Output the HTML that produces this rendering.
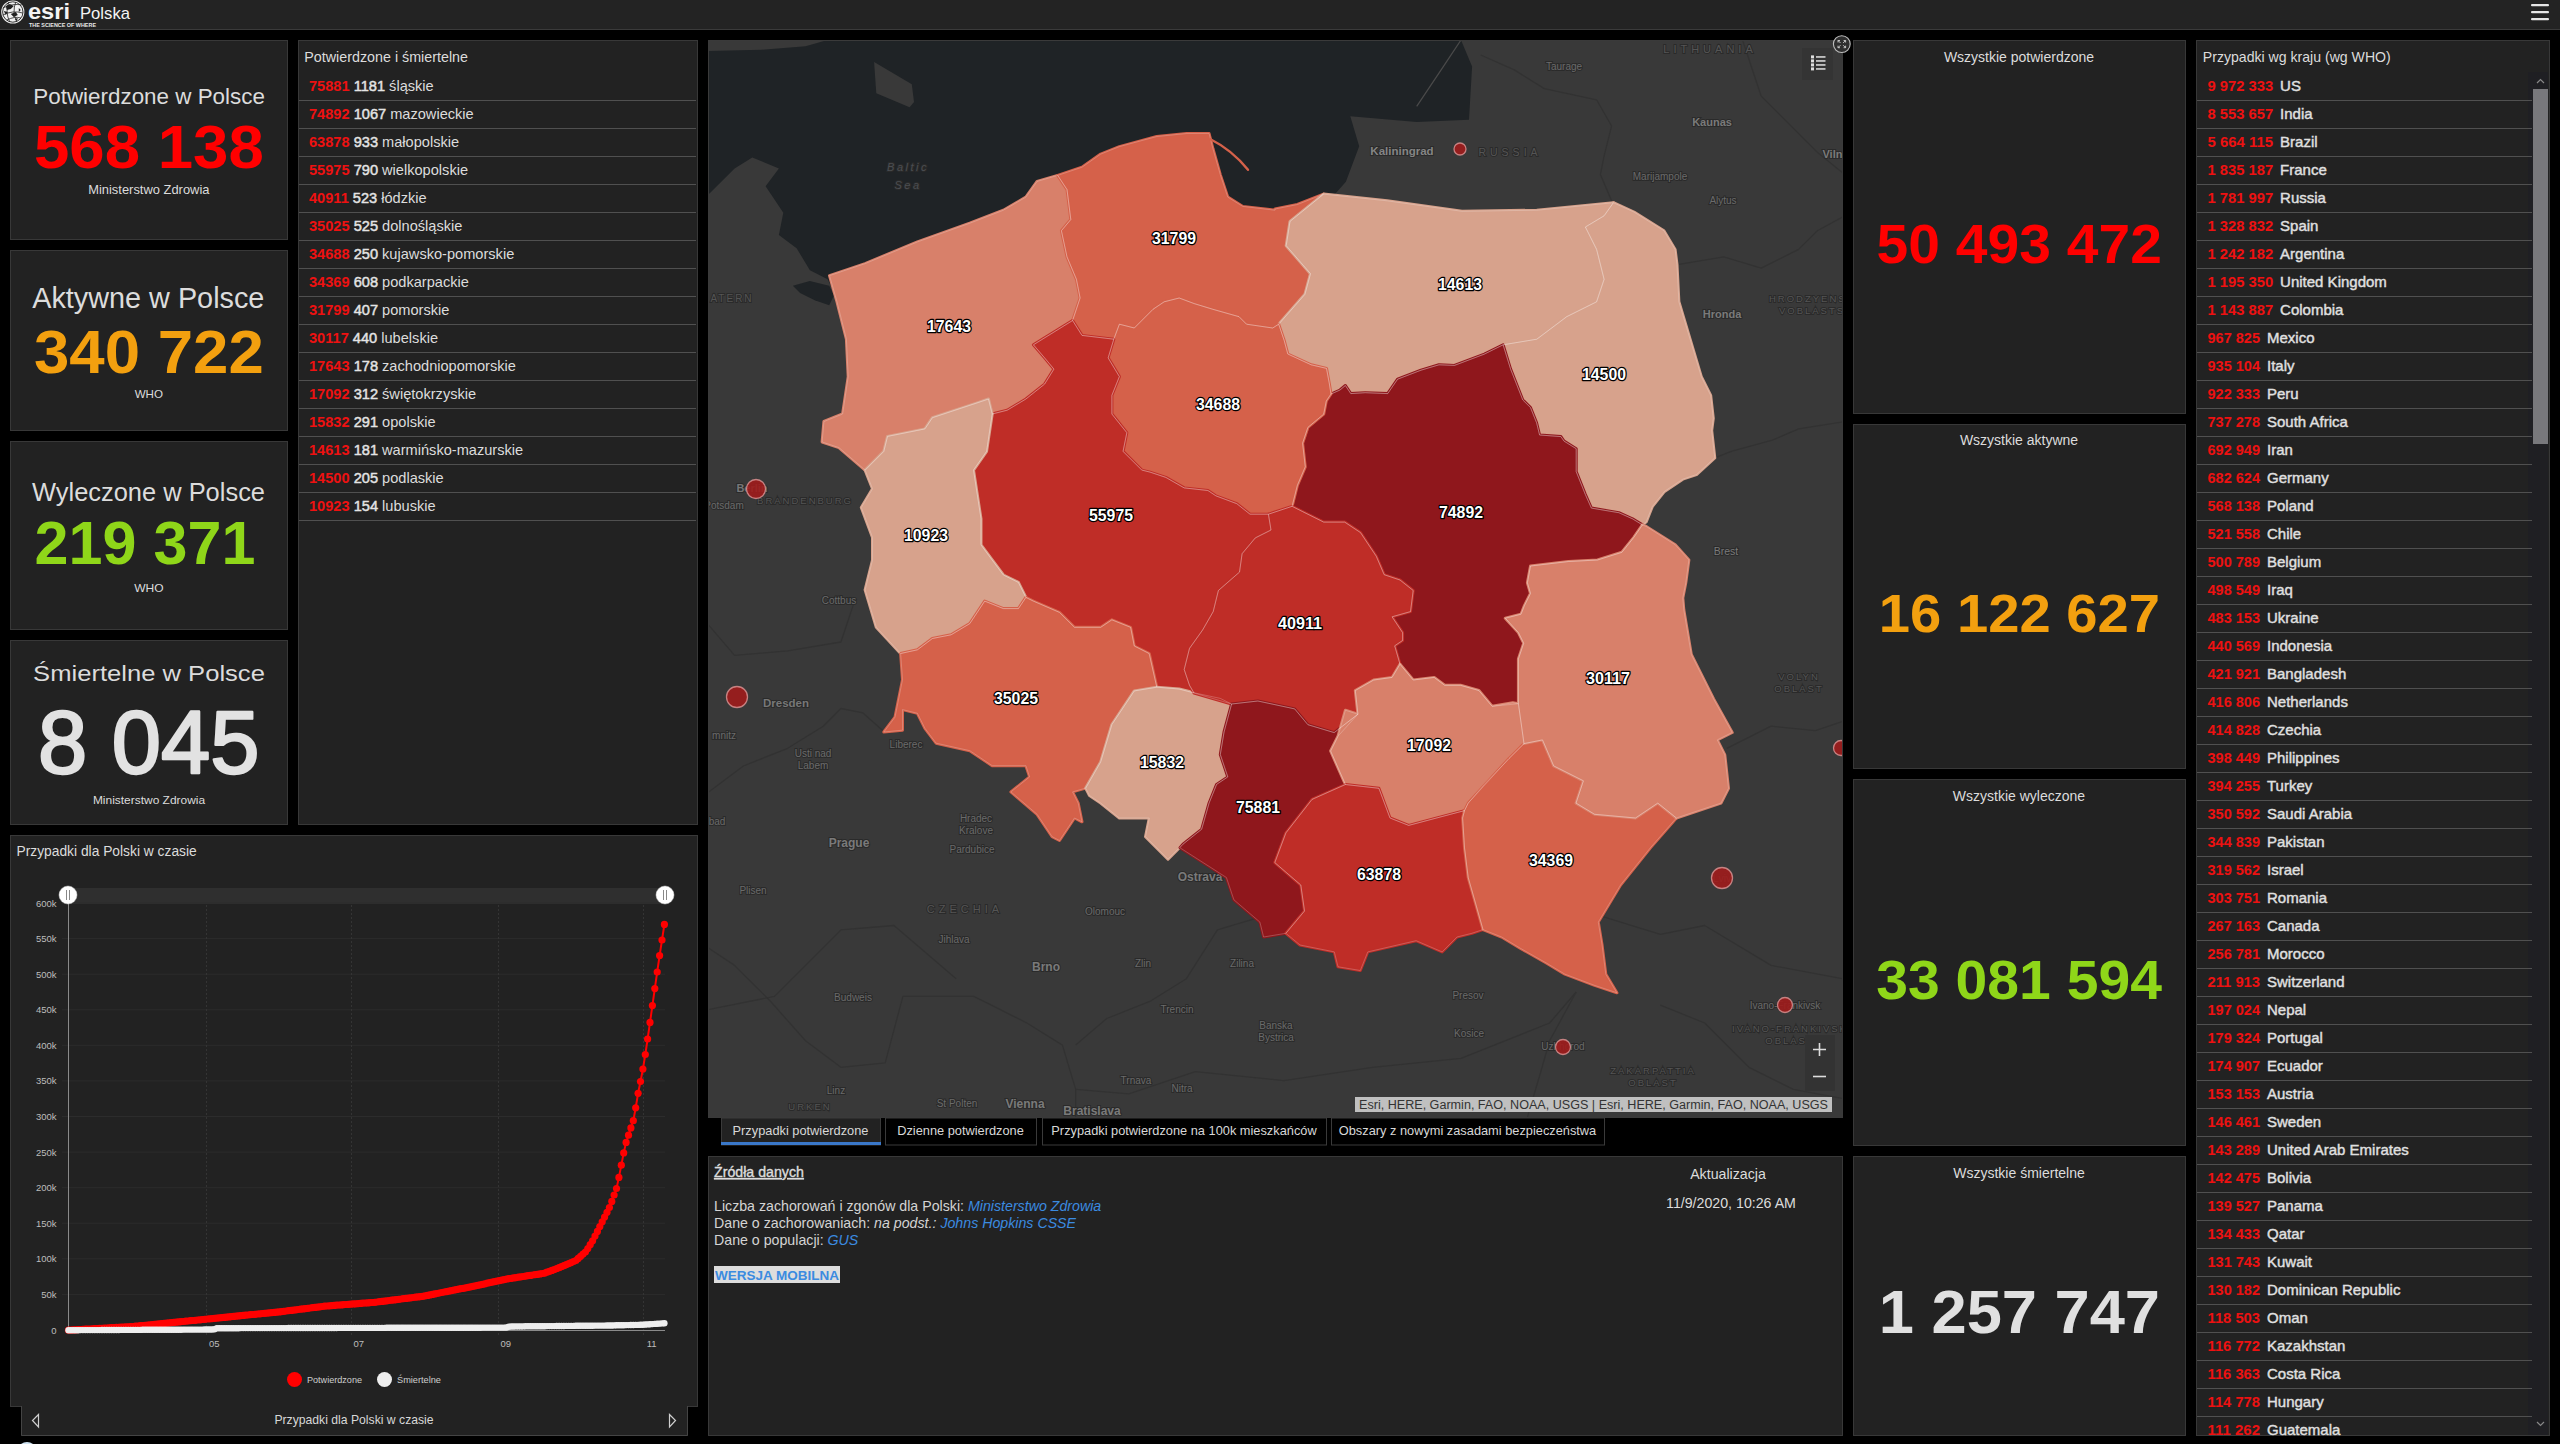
<!DOCTYPE html><html><head><meta charset="utf-8"><title>COVID-19 Polska</title>
<style>html,body{margin:0;padding:0;background:#000;overflow:hidden;}svg{display:block;}text{font-family:"Liberation Sans",sans-serif;}</style></head><body>
<svg width="2560" height="1444" viewBox="0 0 2560 1444">
<rect x="0" y="0" width="2560" height="1444" fill="#000000"/>
<rect x="0" y="0" width="2560" height="29" fill="#232323"/>
<rect x="0" y="29" width="2560" height="1" fill="#3a3a3a"/>
<g transform="translate(12.8,12)">
<circle r="11.6" fill="#f0f0f0"/>
<circle r="10.2" fill="none" stroke="#232323" stroke-width="0.9"/>
<path d="M-7,-6 L-3,-8 L1,-6 L-2,-3 L-6,-2 Z M-9,-1 L-5,0 L-7,3 Z M-2,2 L3,0 L5,3 L1,5 Z M2,7 L5,6 L4,9 Z M6,-4 L8,-2 L6,0 Z" fill="#1e1e1e"/>
<path d="M-10,-4 Q0,-9 9,-7 M-10,3 Q0,-2 10,1 M-6,8 Q2,4 8,6 M-4,-10 Q-8,0 -3,10 M3,-10 Q-1,0 4,10" fill="none" stroke="#262626" stroke-width="0.8"/>
</g>
<text x="28.0" y="19.0" font-size="22.00" fill="#f4f4f4" text-anchor="start" font-weight="bold" textLength="42.0" lengthAdjust="spacingAndGlyphs">esri</text>
<text x="29.0" y="27.3" font-size="5.20" fill="#e8e8e8" text-anchor="start" font-weight="bold" textLength="67.0" lengthAdjust="spacingAndGlyphs">THE SCIENCE OF WHERE</text>
<text x="80.0" y="18.5" font-size="17.00" fill="#f4f4f4" text-anchor="start" textLength="50.0" lengthAdjust="spacingAndGlyphs">Polska</text>
<rect x="2531" y="4" width="18" height="2.2" rx="1" fill="#e6e6e6"/>
<rect x="2531" y="11" width="18" height="2.2" rx="1" fill="#e6e6e6"/>
<rect x="2531" y="18" width="18" height="2.2" rx="1" fill="#e6e6e6"/>
<rect x="10.5" y="40.5" width="277" height="199" fill="#222222" stroke="#383838" stroke-width="1"/>
<rect x="10.5" y="250.5" width="277" height="180" fill="#222222" stroke="#383838" stroke-width="1"/>
<rect x="10.5" y="441.5" width="277" height="188" fill="#222222" stroke="#383838" stroke-width="1"/>
<rect x="10.5" y="640.5" width="277" height="184" fill="#222222" stroke="#383838" stroke-width="1"/>
<text x="33.3" y="103.8" font-size="22.53" fill="#dcdcdc" text-anchor="start" textLength="231.6" lengthAdjust="spacingAndGlyphs">Potwierdzone w Polsce</text>
<text x="33.9" y="168.1" font-size="61.17" fill="#ff0000" text-anchor="start" font-weight="bold" textLength="229.9" lengthAdjust="spacingAndGlyphs">568 138</text>
<text x="88.2" y="194.1" font-size="12.80" fill="#dcdcdc" text-anchor="start" textLength="121.3" lengthAdjust="spacingAndGlyphs">Ministerstwo Zdrowia</text>
<text x="32.2" y="308.2" font-size="29.80" fill="#dcdcdc" text-anchor="start" textLength="232.2" lengthAdjust="spacingAndGlyphs">Aktywne w Polsce</text>
<text x="33.9" y="373.0" font-size="61.03" fill="#f3a00f" text-anchor="start" font-weight="bold" textLength="229.9" lengthAdjust="spacingAndGlyphs">340 722</text>
<text x="134.7" y="398.0" font-size="11.80" fill="#dcdcdc" text-anchor="start" textLength="28.3" lengthAdjust="spacingAndGlyphs">WHO</text>
<text x="32.0" y="500.9" font-size="26.45" fill="#dcdcdc" text-anchor="start" textLength="233.0" lengthAdjust="spacingAndGlyphs">Wyleczone w Polsce</text>
<text x="34.6" y="564.1" font-size="60.47" fill="#8fd619" text-anchor="start" font-weight="bold" textLength="220.8" lengthAdjust="spacingAndGlyphs">219 371</text>
<text x="134.2" y="591.5" font-size="11.80" fill="#dcdcdc" text-anchor="start" textLength="29.4" lengthAdjust="spacingAndGlyphs">WHO</text>
<text x="33.1" y="680.5" font-size="21.66" fill="#dcdcdc" text-anchor="start" textLength="231.8" lengthAdjust="spacingAndGlyphs">Śmiertelne w Polsce</text>
<text x="38.0" y="772.8" font-size="88.83" fill="#e2e2e2" text-anchor="start" textLength="221.4" lengthAdjust="spacingAndGlyphs" stroke="#e2e2e2" stroke-width="2.4" stroke-linejoin="round">8 045</text>
<text x="92.9" y="803.9" font-size="11.80" fill="#dcdcdc" text-anchor="start" textLength="112.2" lengthAdjust="spacingAndGlyphs">Ministerstwo Zdrowia</text>
<rect x="298.5" y="40.5" width="399" height="784" fill="#222222" stroke="#383838" stroke-width="1"/>
<text x="304.3" y="61.6" font-size="14.30" fill="#dcdcdc" text-anchor="start">Potwierdzone i śmiertelne</text>
<text x="309" y="91.3" font-size="14.6" fill="#dcdcdc"><tspan fill="#ee1111" font-weight="bold">75881</tspan> <tspan fill="#e4e4e4" stroke="#e4e4e4" stroke-width="0.45">1181</tspan> śląskie</text>
<rect x="299" y="100" width="397" height="1" fill="#505050"/>
<text x="309" y="119.3" font-size="14.6" fill="#dcdcdc"><tspan fill="#ee1111" font-weight="bold">74892</tspan> <tspan fill="#e4e4e4" stroke="#e4e4e4" stroke-width="0.45">1067</tspan> mazowieckie</text>
<rect x="299" y="128" width="397" height="1" fill="#505050"/>
<text x="309" y="147.3" font-size="14.6" fill="#dcdcdc"><tspan fill="#ee1111" font-weight="bold">63878</tspan> <tspan fill="#e4e4e4" stroke="#e4e4e4" stroke-width="0.45">933</tspan> małopolskie</text>
<rect x="299" y="156" width="397" height="1" fill="#505050"/>
<text x="309" y="175.3" font-size="14.6" fill="#dcdcdc"><tspan fill="#ee1111" font-weight="bold">55975</tspan> <tspan fill="#e4e4e4" stroke="#e4e4e4" stroke-width="0.45">790</tspan> wielkopolskie</text>
<rect x="299" y="184" width="397" height="1" fill="#505050"/>
<text x="309" y="203.3" font-size="14.6" fill="#dcdcdc"><tspan fill="#ee1111" font-weight="bold">40911</tspan> <tspan fill="#e4e4e4" stroke="#e4e4e4" stroke-width="0.45">523</tspan> łódzkie</text>
<rect x="299" y="212" width="397" height="1" fill="#505050"/>
<text x="309" y="231.3" font-size="14.6" fill="#dcdcdc"><tspan fill="#ee1111" font-weight="bold">35025</tspan> <tspan fill="#e4e4e4" stroke="#e4e4e4" stroke-width="0.45">525</tspan> dolnośląskie</text>
<rect x="299" y="240" width="397" height="1" fill="#505050"/>
<text x="309" y="259.3" font-size="14.6" fill="#dcdcdc"><tspan fill="#ee1111" font-weight="bold">34688</tspan> <tspan fill="#e4e4e4" stroke="#e4e4e4" stroke-width="0.45">250</tspan> kujawsko-pomorskie</text>
<rect x="299" y="268" width="397" height="1" fill="#505050"/>
<text x="309" y="287.3" font-size="14.6" fill="#dcdcdc"><tspan fill="#ee1111" font-weight="bold">34369</tspan> <tspan fill="#e4e4e4" stroke="#e4e4e4" stroke-width="0.45">608</tspan> podkarpackie</text>
<rect x="299" y="296" width="397" height="1" fill="#505050"/>
<text x="309" y="315.3" font-size="14.6" fill="#dcdcdc"><tspan fill="#ee1111" font-weight="bold">31799</tspan> <tspan fill="#e4e4e4" stroke="#e4e4e4" stroke-width="0.45">407</tspan> pomorskie</text>
<rect x="299" y="324" width="397" height="1" fill="#505050"/>
<text x="309" y="343.3" font-size="14.6" fill="#dcdcdc"><tspan fill="#ee1111" font-weight="bold">30117</tspan> <tspan fill="#e4e4e4" stroke="#e4e4e4" stroke-width="0.45">440</tspan> lubelskie</text>
<rect x="299" y="352" width="397" height="1" fill="#505050"/>
<text x="309" y="371.3" font-size="14.6" fill="#dcdcdc"><tspan fill="#ee1111" font-weight="bold">17643</tspan> <tspan fill="#e4e4e4" stroke="#e4e4e4" stroke-width="0.45">178</tspan> zachodniopomorskie</text>
<rect x="299" y="380" width="397" height="1" fill="#505050"/>
<text x="309" y="399.3" font-size="14.6" fill="#dcdcdc"><tspan fill="#ee1111" font-weight="bold">17092</tspan> <tspan fill="#e4e4e4" stroke="#e4e4e4" stroke-width="0.45">312</tspan> świętokrzyskie</text>
<rect x="299" y="408" width="397" height="1" fill="#505050"/>
<text x="309" y="427.3" font-size="14.6" fill="#dcdcdc"><tspan fill="#ee1111" font-weight="bold">15832</tspan> <tspan fill="#e4e4e4" stroke="#e4e4e4" stroke-width="0.45">291</tspan> opolskie</text>
<rect x="299" y="436" width="397" height="1" fill="#505050"/>
<text x="309" y="455.3" font-size="14.6" fill="#dcdcdc"><tspan fill="#ee1111" font-weight="bold">14613</tspan> <tspan fill="#e4e4e4" stroke="#e4e4e4" stroke-width="0.45">181</tspan> warmińsko-mazurskie</text>
<rect x="299" y="464" width="397" height="1" fill="#505050"/>
<text x="309" y="483.3" font-size="14.6" fill="#dcdcdc"><tspan fill="#ee1111" font-weight="bold">14500</tspan> <tspan fill="#e4e4e4" stroke="#e4e4e4" stroke-width="0.45">205</tspan> podlaskie</text>
<rect x="299" y="492" width="397" height="1" fill="#505050"/>
<text x="309" y="511.3" font-size="14.6" fill="#dcdcdc"><tspan fill="#ee1111" font-weight="bold">10923</tspan> <tspan fill="#e4e4e4" stroke="#e4e4e4" stroke-width="0.45">154</tspan> lubuskie</text>
<rect x="299" y="520" width="397" height="1" fill="#505050"/>
<rect x="10.5" y="835.5" width="687" height="571" fill="#222222" stroke="#383838" stroke-width="1"/>
<text x="16.5" y="855.6" font-size="13.80" fill="#dcdcdc" text-anchor="start">Przypadki dla Polski w czasie</text>
<rect x="68" y="888" width="597" height="16" fill="#2f2f2f"/>
<text x="56.5" y="1333.5" font-size="9.50" fill="#bdbdbd" text-anchor="end">0</text>
<text x="56.5" y="1297.9" font-size="9.50" fill="#bdbdbd" text-anchor="end">50k</text>
<line x1="62" y1="1294.4" x2="665" y2="1294.4" stroke="#2c2c2c" stroke-width="1"/>
<text x="56.5" y="1262.3" font-size="9.50" fill="#bdbdbd" text-anchor="end">100k</text>
<line x1="62" y1="1258.8" x2="665" y2="1258.8" stroke="#2c2c2c" stroke-width="1"/>
<text x="56.5" y="1226.8" font-size="9.50" fill="#bdbdbd" text-anchor="end">150k</text>
<line x1="62" y1="1223.2" x2="665" y2="1223.2" stroke="#2c2c2c" stroke-width="1"/>
<text x="56.5" y="1191.2" font-size="9.50" fill="#bdbdbd" text-anchor="end">200k</text>
<line x1="62" y1="1187.7" x2="665" y2="1187.7" stroke="#2c2c2c" stroke-width="1"/>
<text x="56.5" y="1155.6" font-size="9.50" fill="#bdbdbd" text-anchor="end">250k</text>
<line x1="62" y1="1152.1" x2="665" y2="1152.1" stroke="#2c2c2c" stroke-width="1"/>
<text x="56.5" y="1120.0" font-size="9.50" fill="#bdbdbd" text-anchor="end">300k</text>
<line x1="62" y1="1116.5" x2="665" y2="1116.5" stroke="#2c2c2c" stroke-width="1"/>
<text x="56.5" y="1084.4" font-size="9.50" fill="#bdbdbd" text-anchor="end">350k</text>
<line x1="62" y1="1080.9" x2="665" y2="1080.9" stroke="#2c2c2c" stroke-width="1"/>
<text x="56.5" y="1048.8" font-size="9.50" fill="#bdbdbd" text-anchor="end">400k</text>
<line x1="62" y1="1045.3" x2="665" y2="1045.3" stroke="#2c2c2c" stroke-width="1"/>
<text x="56.5" y="1013.2" font-size="9.50" fill="#bdbdbd" text-anchor="end">450k</text>
<line x1="62" y1="1009.8" x2="665" y2="1009.8" stroke="#2c2c2c" stroke-width="1"/>
<text x="56.5" y="977.7" font-size="9.50" fill="#bdbdbd" text-anchor="end">500k</text>
<line x1="62" y1="974.2" x2="665" y2="974.2" stroke="#2c2c2c" stroke-width="1"/>
<text x="56.5" y="942.1" font-size="9.50" fill="#bdbdbd" text-anchor="end">550k</text>
<line x1="62" y1="938.6" x2="665" y2="938.6" stroke="#2c2c2c" stroke-width="1"/>
<text x="56.5" y="906.5" font-size="9.50" fill="#bdbdbd" text-anchor="end">600k</text>
<line x1="62" y1="903.0" x2="665" y2="903.0" stroke="#2c2c2c" stroke-width="1"/>
<line x1="206.5" y1="905" x2="206.5" y2="1335" stroke="#343434" stroke-width="1" stroke-dasharray="2,2"/>
<text x="214.2" y="1346.5" font-size="9.50" fill="#bdbdbd" text-anchor="middle">05</text>
<line x1="351.5" y1="905" x2="351.5" y2="1335" stroke="#343434" stroke-width="1" stroke-dasharray="2,2"/>
<text x="358.7" y="1346.5" font-size="9.50" fill="#bdbdbd" text-anchor="middle">07</text>
<line x1="498.5" y1="905" x2="498.5" y2="1335" stroke="#343434" stroke-width="1" stroke-dasharray="2,2"/>
<text x="505.8" y="1346.5" font-size="9.50" fill="#bdbdbd" text-anchor="middle">09</text>
<line x1="643.5" y1="905" x2="643.5" y2="1335" stroke="#343434" stroke-width="1" stroke-dasharray="2,2"/>
<text x="651.7" y="1346.5" font-size="9.50" fill="#bdbdbd" text-anchor="middle">11</text>
<line x1="68.5" y1="903" x2="68.5" y2="1331" stroke="#8a8a8a" stroke-width="1"/>
<line x1="68" y1="1330.5" x2="665" y2="1330.5" stroke="#8a8a8a" stroke-width="1"/>
<polyline fill="none" stroke="#ff0000" stroke-width="2" points="68.5,1330.2 70.9,1330.1 73.3,1329.9 75.7,1329.8 78.1,1329.6 80.5,1329.5 82.9,1329.4 85.3,1329.2 87.6,1329.1 90.0,1329.0 92.4,1328.8 94.8,1328.7 97.2,1328.5 99.6,1328.4 102.0,1328.3 104.4,1328.1 106.8,1328.0 109.2,1327.9 111.6,1327.7 114.0,1327.6 116.4,1327.4 118.8,1327.3 121.1,1327.2 123.5,1327.0 125.9,1326.9 128.3,1326.8 130.7,1326.6 133.1,1326.5 135.5,1326.2 137.9,1326.0 140.3,1325.7 142.7,1325.5 145.1,1325.3 147.5,1325.0 149.9,1324.8 152.3,1324.6 154.7,1324.3 157.0,1324.1 159.4,1323.8 161.8,1323.6 164.2,1323.4 166.6,1323.1 169.0,1322.9 171.4,1322.7 173.8,1322.4 176.2,1322.2 178.6,1321.9 181.0,1321.7 183.4,1321.5 185.8,1321.2 188.2,1321.0 190.6,1320.7 192.9,1320.5 195.3,1320.3 197.7,1320.0 200.1,1319.8 202.5,1319.5 204.9,1319.3 207.3,1319.0 209.7,1318.8 212.1,1318.6 214.5,1318.3 216.9,1318.1 219.3,1317.8 221.7,1317.6 224.1,1317.4 226.4,1317.1 228.8,1316.9 231.2,1316.6 233.6,1316.4 236.0,1316.2 238.4,1315.9 240.8,1315.7 243.2,1315.4 245.6,1315.2 248.0,1315.0 250.4,1314.7 252.8,1314.5 255.2,1314.3 257.6,1314.0 260.0,1313.8 262.3,1313.5 264.7,1313.3 267.1,1313.1 269.5,1312.8 271.9,1312.6 274.3,1312.4 276.7,1312.1 279.1,1311.9 281.5,1311.6 283.9,1311.3 286.3,1311.0 288.7,1310.7 291.1,1310.4 293.5,1310.1 295.9,1309.8 298.2,1309.5 300.6,1309.2 303.0,1308.9 305.4,1308.6 307.8,1308.3 310.2,1308.0 312.6,1307.7 315.0,1307.4 317.4,1307.1 319.8,1306.8 322.2,1306.5 324.6,1306.2 327.0,1306.0 329.4,1305.8 331.7,1305.6 334.1,1305.4 336.5,1305.2 338.9,1305.0 341.3,1304.9 343.7,1304.7 346.1,1304.5 348.5,1304.3 350.9,1304.1 353.3,1303.9 355.7,1303.8 358.1,1303.6 360.5,1303.4 362.9,1303.2 365.3,1303.0 367.6,1302.9 370.0,1302.7 372.4,1302.5 374.8,1302.3 377.2,1302.0 379.6,1301.7 382.0,1301.4 384.4,1301.1 386.8,1300.8 389.2,1300.5 391.6,1300.2 394.0,1299.9 396.4,1299.6 398.8,1299.3 401.2,1299.0 403.5,1298.7 405.9,1298.4 408.3,1298.1 410.7,1297.8 413.1,1297.5 415.5,1297.2 417.9,1296.9 420.3,1296.6 422.7,1296.3 425.1,1295.8 427.5,1295.4 429.9,1294.9 432.3,1294.4 434.7,1293.9 437.0,1293.5 439.4,1293.0 441.8,1292.5 444.2,1292.0 446.6,1291.6 449.0,1291.1 451.4,1290.6 453.8,1290.2 456.2,1289.7 458.6,1289.2 461.0,1288.7 463.4,1288.3 465.8,1287.8 468.2,1287.3 470.6,1286.8 472.9,1286.3 475.3,1285.8 477.7,1285.3 480.1,1284.8 482.5,1284.3 484.9,1283.8 487.3,1283.2 489.7,1282.7 492.1,1282.2 494.5,1281.7 496.9,1281.2 499.3,1280.7 501.7,1280.2 504.1,1279.6 506.5,1279.1 508.8,1278.7 511.2,1278.3 513.6,1277.9 516.0,1277.6 518.4,1277.2 520.8,1276.8 523.2,1276.5 525.6,1276.1 528.0,1275.7 530.4,1275.4 532.8,1275.0 535.2,1274.6 537.6,1274.3 540.0,1273.9 542.3,1273.5 544.7,1273.1 547.1,1272.2 549.5,1271.3 551.9,1270.4 554.3,1269.5 556.7,1268.6 559.1,1267.7 561.5,1266.7 563.9,1265.7 566.3,1264.6 568.7,1263.6 571.1,1262.6 573.5,1261.5 575.9,1260.5 578.2,1258.4 580.6,1256.3 583.0,1254.1 585.4,1252.0 587.8,1248.6 590.2,1244.7 592.6,1240.8 595.0,1236.1 597.4,1231.4 599.8,1226.6 602.2,1221.8 604.6,1217.1 607.0,1212.3 609.4,1207.5 611.8,1201.4 614.1,1195.0 616.5,1188.5 618.9,1177.4 621.3,1165.2 623.7,1152.9 626.1,1142.4 628.5,1135.2 630.9,1127.9 633.3,1120.7 635.7,1107.8 638.1,1093.3 640.5,1081.5 642.9,1069.1 645.3,1054.5 647.6,1039.0 650.0,1022.4 652.4,1005.6 654.8,988.6 657.2,972.0 659.6,955.6 662.0,940.0 664.4,924.4"/>
<circle cx="68.5" cy="1330.2" r="3.6" fill="#ff0000"/>
<circle cx="70.9" cy="1330.1" r="3.6" fill="#ff0000"/>
<circle cx="73.3" cy="1329.9" r="3.6" fill="#ff0000"/>
<circle cx="75.7" cy="1329.8" r="3.6" fill="#ff0000"/>
<circle cx="78.1" cy="1329.6" r="3.6" fill="#ff0000"/>
<circle cx="80.5" cy="1329.5" r="3.6" fill="#ff0000"/>
<circle cx="82.9" cy="1329.4" r="3.6" fill="#ff0000"/>
<circle cx="85.3" cy="1329.2" r="3.6" fill="#ff0000"/>
<circle cx="87.6" cy="1329.1" r="3.6" fill="#ff0000"/>
<circle cx="90.0" cy="1329.0" r="3.6" fill="#ff0000"/>
<circle cx="92.4" cy="1328.8" r="3.6" fill="#ff0000"/>
<circle cx="94.8" cy="1328.7" r="3.6" fill="#ff0000"/>
<circle cx="97.2" cy="1328.5" r="3.6" fill="#ff0000"/>
<circle cx="99.6" cy="1328.4" r="3.6" fill="#ff0000"/>
<circle cx="102.0" cy="1328.3" r="3.6" fill="#ff0000"/>
<circle cx="104.4" cy="1328.1" r="3.6" fill="#ff0000"/>
<circle cx="106.8" cy="1328.0" r="3.6" fill="#ff0000"/>
<circle cx="109.2" cy="1327.9" r="3.6" fill="#ff0000"/>
<circle cx="111.6" cy="1327.7" r="3.6" fill="#ff0000"/>
<circle cx="114.0" cy="1327.6" r="3.6" fill="#ff0000"/>
<circle cx="116.4" cy="1327.4" r="3.6" fill="#ff0000"/>
<circle cx="118.8" cy="1327.3" r="3.6" fill="#ff0000"/>
<circle cx="121.1" cy="1327.2" r="3.6" fill="#ff0000"/>
<circle cx="123.5" cy="1327.0" r="3.6" fill="#ff0000"/>
<circle cx="125.9" cy="1326.9" r="3.6" fill="#ff0000"/>
<circle cx="128.3" cy="1326.8" r="3.6" fill="#ff0000"/>
<circle cx="130.7" cy="1326.6" r="3.6" fill="#ff0000"/>
<circle cx="133.1" cy="1326.5" r="3.6" fill="#ff0000"/>
<circle cx="135.5" cy="1326.2" r="3.6" fill="#ff0000"/>
<circle cx="137.9" cy="1326.0" r="3.6" fill="#ff0000"/>
<circle cx="140.3" cy="1325.7" r="3.6" fill="#ff0000"/>
<circle cx="142.7" cy="1325.5" r="3.6" fill="#ff0000"/>
<circle cx="145.1" cy="1325.3" r="3.6" fill="#ff0000"/>
<circle cx="147.5" cy="1325.0" r="3.6" fill="#ff0000"/>
<circle cx="149.9" cy="1324.8" r="3.6" fill="#ff0000"/>
<circle cx="152.3" cy="1324.6" r="3.6" fill="#ff0000"/>
<circle cx="154.7" cy="1324.3" r="3.6" fill="#ff0000"/>
<circle cx="157.0" cy="1324.1" r="3.6" fill="#ff0000"/>
<circle cx="159.4" cy="1323.8" r="3.6" fill="#ff0000"/>
<circle cx="161.8" cy="1323.6" r="3.6" fill="#ff0000"/>
<circle cx="164.2" cy="1323.4" r="3.6" fill="#ff0000"/>
<circle cx="166.6" cy="1323.1" r="3.6" fill="#ff0000"/>
<circle cx="169.0" cy="1322.9" r="3.6" fill="#ff0000"/>
<circle cx="171.4" cy="1322.7" r="3.6" fill="#ff0000"/>
<circle cx="173.8" cy="1322.4" r="3.6" fill="#ff0000"/>
<circle cx="176.2" cy="1322.2" r="3.6" fill="#ff0000"/>
<circle cx="178.6" cy="1321.9" r="3.6" fill="#ff0000"/>
<circle cx="181.0" cy="1321.7" r="3.6" fill="#ff0000"/>
<circle cx="183.4" cy="1321.5" r="3.6" fill="#ff0000"/>
<circle cx="185.8" cy="1321.2" r="3.6" fill="#ff0000"/>
<circle cx="188.2" cy="1321.0" r="3.6" fill="#ff0000"/>
<circle cx="190.6" cy="1320.7" r="3.6" fill="#ff0000"/>
<circle cx="192.9" cy="1320.5" r="3.6" fill="#ff0000"/>
<circle cx="195.3" cy="1320.3" r="3.6" fill="#ff0000"/>
<circle cx="197.7" cy="1320.0" r="3.6" fill="#ff0000"/>
<circle cx="200.1" cy="1319.8" r="3.6" fill="#ff0000"/>
<circle cx="202.5" cy="1319.5" r="3.6" fill="#ff0000"/>
<circle cx="204.9" cy="1319.3" r="3.6" fill="#ff0000"/>
<circle cx="207.3" cy="1319.0" r="3.6" fill="#ff0000"/>
<circle cx="209.7" cy="1318.8" r="3.6" fill="#ff0000"/>
<circle cx="212.1" cy="1318.6" r="3.6" fill="#ff0000"/>
<circle cx="214.5" cy="1318.3" r="3.6" fill="#ff0000"/>
<circle cx="216.9" cy="1318.1" r="3.6" fill="#ff0000"/>
<circle cx="219.3" cy="1317.8" r="3.6" fill="#ff0000"/>
<circle cx="221.7" cy="1317.6" r="3.6" fill="#ff0000"/>
<circle cx="224.1" cy="1317.4" r="3.6" fill="#ff0000"/>
<circle cx="226.4" cy="1317.1" r="3.6" fill="#ff0000"/>
<circle cx="228.8" cy="1316.9" r="3.6" fill="#ff0000"/>
<circle cx="231.2" cy="1316.6" r="3.6" fill="#ff0000"/>
<circle cx="233.6" cy="1316.4" r="3.6" fill="#ff0000"/>
<circle cx="236.0" cy="1316.2" r="3.6" fill="#ff0000"/>
<circle cx="238.4" cy="1315.9" r="3.6" fill="#ff0000"/>
<circle cx="240.8" cy="1315.7" r="3.6" fill="#ff0000"/>
<circle cx="243.2" cy="1315.4" r="3.6" fill="#ff0000"/>
<circle cx="245.6" cy="1315.2" r="3.6" fill="#ff0000"/>
<circle cx="248.0" cy="1315.0" r="3.6" fill="#ff0000"/>
<circle cx="250.4" cy="1314.7" r="3.6" fill="#ff0000"/>
<circle cx="252.8" cy="1314.5" r="3.6" fill="#ff0000"/>
<circle cx="255.2" cy="1314.3" r="3.6" fill="#ff0000"/>
<circle cx="257.6" cy="1314.0" r="3.6" fill="#ff0000"/>
<circle cx="260.0" cy="1313.8" r="3.6" fill="#ff0000"/>
<circle cx="262.3" cy="1313.5" r="3.6" fill="#ff0000"/>
<circle cx="264.7" cy="1313.3" r="3.6" fill="#ff0000"/>
<circle cx="267.1" cy="1313.1" r="3.6" fill="#ff0000"/>
<circle cx="269.5" cy="1312.8" r="3.6" fill="#ff0000"/>
<circle cx="271.9" cy="1312.6" r="3.6" fill="#ff0000"/>
<circle cx="274.3" cy="1312.4" r="3.6" fill="#ff0000"/>
<circle cx="276.7" cy="1312.1" r="3.6" fill="#ff0000"/>
<circle cx="279.1" cy="1311.9" r="3.6" fill="#ff0000"/>
<circle cx="281.5" cy="1311.6" r="3.6" fill="#ff0000"/>
<circle cx="283.9" cy="1311.3" r="3.6" fill="#ff0000"/>
<circle cx="286.3" cy="1311.0" r="3.6" fill="#ff0000"/>
<circle cx="288.7" cy="1310.7" r="3.6" fill="#ff0000"/>
<circle cx="291.1" cy="1310.4" r="3.6" fill="#ff0000"/>
<circle cx="293.5" cy="1310.1" r="3.6" fill="#ff0000"/>
<circle cx="295.9" cy="1309.8" r="3.6" fill="#ff0000"/>
<circle cx="298.2" cy="1309.5" r="3.6" fill="#ff0000"/>
<circle cx="300.6" cy="1309.2" r="3.6" fill="#ff0000"/>
<circle cx="303.0" cy="1308.9" r="3.6" fill="#ff0000"/>
<circle cx="305.4" cy="1308.6" r="3.6" fill="#ff0000"/>
<circle cx="307.8" cy="1308.3" r="3.6" fill="#ff0000"/>
<circle cx="310.2" cy="1308.0" r="3.6" fill="#ff0000"/>
<circle cx="312.6" cy="1307.7" r="3.6" fill="#ff0000"/>
<circle cx="315.0" cy="1307.4" r="3.6" fill="#ff0000"/>
<circle cx="317.4" cy="1307.1" r="3.6" fill="#ff0000"/>
<circle cx="319.8" cy="1306.8" r="3.6" fill="#ff0000"/>
<circle cx="322.2" cy="1306.5" r="3.6" fill="#ff0000"/>
<circle cx="324.6" cy="1306.2" r="3.6" fill="#ff0000"/>
<circle cx="327.0" cy="1306.0" r="3.6" fill="#ff0000"/>
<circle cx="329.4" cy="1305.8" r="3.6" fill="#ff0000"/>
<circle cx="331.7" cy="1305.6" r="3.6" fill="#ff0000"/>
<circle cx="334.1" cy="1305.4" r="3.6" fill="#ff0000"/>
<circle cx="336.5" cy="1305.2" r="3.6" fill="#ff0000"/>
<circle cx="338.9" cy="1305.0" r="3.6" fill="#ff0000"/>
<circle cx="341.3" cy="1304.9" r="3.6" fill="#ff0000"/>
<circle cx="343.7" cy="1304.7" r="3.6" fill="#ff0000"/>
<circle cx="346.1" cy="1304.5" r="3.6" fill="#ff0000"/>
<circle cx="348.5" cy="1304.3" r="3.6" fill="#ff0000"/>
<circle cx="350.9" cy="1304.1" r="3.6" fill="#ff0000"/>
<circle cx="353.3" cy="1303.9" r="3.6" fill="#ff0000"/>
<circle cx="355.7" cy="1303.8" r="3.6" fill="#ff0000"/>
<circle cx="358.1" cy="1303.6" r="3.6" fill="#ff0000"/>
<circle cx="360.5" cy="1303.4" r="3.6" fill="#ff0000"/>
<circle cx="362.9" cy="1303.2" r="3.6" fill="#ff0000"/>
<circle cx="365.3" cy="1303.0" r="3.6" fill="#ff0000"/>
<circle cx="367.6" cy="1302.9" r="3.6" fill="#ff0000"/>
<circle cx="370.0" cy="1302.7" r="3.6" fill="#ff0000"/>
<circle cx="372.4" cy="1302.5" r="3.6" fill="#ff0000"/>
<circle cx="374.8" cy="1302.3" r="3.6" fill="#ff0000"/>
<circle cx="377.2" cy="1302.0" r="3.6" fill="#ff0000"/>
<circle cx="379.6" cy="1301.7" r="3.6" fill="#ff0000"/>
<circle cx="382.0" cy="1301.4" r="3.6" fill="#ff0000"/>
<circle cx="384.4" cy="1301.1" r="3.6" fill="#ff0000"/>
<circle cx="386.8" cy="1300.8" r="3.6" fill="#ff0000"/>
<circle cx="389.2" cy="1300.5" r="3.6" fill="#ff0000"/>
<circle cx="391.6" cy="1300.2" r="3.6" fill="#ff0000"/>
<circle cx="394.0" cy="1299.9" r="3.6" fill="#ff0000"/>
<circle cx="396.4" cy="1299.6" r="3.6" fill="#ff0000"/>
<circle cx="398.8" cy="1299.3" r="3.6" fill="#ff0000"/>
<circle cx="401.2" cy="1299.0" r="3.6" fill="#ff0000"/>
<circle cx="403.5" cy="1298.7" r="3.6" fill="#ff0000"/>
<circle cx="405.9" cy="1298.4" r="3.6" fill="#ff0000"/>
<circle cx="408.3" cy="1298.1" r="3.6" fill="#ff0000"/>
<circle cx="410.7" cy="1297.8" r="3.6" fill="#ff0000"/>
<circle cx="413.1" cy="1297.5" r="3.6" fill="#ff0000"/>
<circle cx="415.5" cy="1297.2" r="3.6" fill="#ff0000"/>
<circle cx="417.9" cy="1296.9" r="3.6" fill="#ff0000"/>
<circle cx="420.3" cy="1296.6" r="3.6" fill="#ff0000"/>
<circle cx="422.7" cy="1296.3" r="3.6" fill="#ff0000"/>
<circle cx="425.1" cy="1295.8" r="3.6" fill="#ff0000"/>
<circle cx="427.5" cy="1295.4" r="3.6" fill="#ff0000"/>
<circle cx="429.9" cy="1294.9" r="3.6" fill="#ff0000"/>
<circle cx="432.3" cy="1294.4" r="3.6" fill="#ff0000"/>
<circle cx="434.7" cy="1293.9" r="3.6" fill="#ff0000"/>
<circle cx="437.0" cy="1293.5" r="3.6" fill="#ff0000"/>
<circle cx="439.4" cy="1293.0" r="3.6" fill="#ff0000"/>
<circle cx="441.8" cy="1292.5" r="3.6" fill="#ff0000"/>
<circle cx="444.2" cy="1292.0" r="3.6" fill="#ff0000"/>
<circle cx="446.6" cy="1291.6" r="3.6" fill="#ff0000"/>
<circle cx="449.0" cy="1291.1" r="3.6" fill="#ff0000"/>
<circle cx="451.4" cy="1290.6" r="3.6" fill="#ff0000"/>
<circle cx="453.8" cy="1290.2" r="3.6" fill="#ff0000"/>
<circle cx="456.2" cy="1289.7" r="3.6" fill="#ff0000"/>
<circle cx="458.6" cy="1289.2" r="3.6" fill="#ff0000"/>
<circle cx="461.0" cy="1288.7" r="3.6" fill="#ff0000"/>
<circle cx="463.4" cy="1288.3" r="3.6" fill="#ff0000"/>
<circle cx="465.8" cy="1287.8" r="3.6" fill="#ff0000"/>
<circle cx="468.2" cy="1287.3" r="3.6" fill="#ff0000"/>
<circle cx="470.6" cy="1286.8" r="3.6" fill="#ff0000"/>
<circle cx="472.9" cy="1286.3" r="3.6" fill="#ff0000"/>
<circle cx="475.3" cy="1285.8" r="3.6" fill="#ff0000"/>
<circle cx="477.7" cy="1285.3" r="3.6" fill="#ff0000"/>
<circle cx="480.1" cy="1284.8" r="3.6" fill="#ff0000"/>
<circle cx="482.5" cy="1284.3" r="3.6" fill="#ff0000"/>
<circle cx="484.9" cy="1283.8" r="3.6" fill="#ff0000"/>
<circle cx="487.3" cy="1283.2" r="3.6" fill="#ff0000"/>
<circle cx="489.7" cy="1282.7" r="3.6" fill="#ff0000"/>
<circle cx="492.1" cy="1282.2" r="3.6" fill="#ff0000"/>
<circle cx="494.5" cy="1281.7" r="3.6" fill="#ff0000"/>
<circle cx="496.9" cy="1281.2" r="3.6" fill="#ff0000"/>
<circle cx="499.3" cy="1280.7" r="3.6" fill="#ff0000"/>
<circle cx="501.7" cy="1280.2" r="3.6" fill="#ff0000"/>
<circle cx="504.1" cy="1279.6" r="3.6" fill="#ff0000"/>
<circle cx="506.5" cy="1279.1" r="3.6" fill="#ff0000"/>
<circle cx="508.8" cy="1278.7" r="3.6" fill="#ff0000"/>
<circle cx="511.2" cy="1278.3" r="3.6" fill="#ff0000"/>
<circle cx="513.6" cy="1277.9" r="3.6" fill="#ff0000"/>
<circle cx="516.0" cy="1277.6" r="3.6" fill="#ff0000"/>
<circle cx="518.4" cy="1277.2" r="3.6" fill="#ff0000"/>
<circle cx="520.8" cy="1276.8" r="3.6" fill="#ff0000"/>
<circle cx="523.2" cy="1276.5" r="3.6" fill="#ff0000"/>
<circle cx="525.6" cy="1276.1" r="3.6" fill="#ff0000"/>
<circle cx="528.0" cy="1275.7" r="3.6" fill="#ff0000"/>
<circle cx="530.4" cy="1275.4" r="3.6" fill="#ff0000"/>
<circle cx="532.8" cy="1275.0" r="3.6" fill="#ff0000"/>
<circle cx="535.2" cy="1274.6" r="3.6" fill="#ff0000"/>
<circle cx="537.6" cy="1274.3" r="3.6" fill="#ff0000"/>
<circle cx="540.0" cy="1273.9" r="3.6" fill="#ff0000"/>
<circle cx="542.3" cy="1273.5" r="3.6" fill="#ff0000"/>
<circle cx="544.7" cy="1273.1" r="3.6" fill="#ff0000"/>
<circle cx="547.1" cy="1272.2" r="3.6" fill="#ff0000"/>
<circle cx="549.5" cy="1271.3" r="3.6" fill="#ff0000"/>
<circle cx="551.9" cy="1270.4" r="3.6" fill="#ff0000"/>
<circle cx="554.3" cy="1269.5" r="3.6" fill="#ff0000"/>
<circle cx="556.7" cy="1268.6" r="3.6" fill="#ff0000"/>
<circle cx="559.1" cy="1267.7" r="3.6" fill="#ff0000"/>
<circle cx="561.5" cy="1266.7" r="3.6" fill="#ff0000"/>
<circle cx="563.9" cy="1265.7" r="3.6" fill="#ff0000"/>
<circle cx="566.3" cy="1264.6" r="3.6" fill="#ff0000"/>
<circle cx="568.7" cy="1263.6" r="3.6" fill="#ff0000"/>
<circle cx="571.1" cy="1262.6" r="3.6" fill="#ff0000"/>
<circle cx="573.5" cy="1261.5" r="3.6" fill="#ff0000"/>
<circle cx="575.9" cy="1260.5" r="3.6" fill="#ff0000"/>
<circle cx="578.2" cy="1258.4" r="3.6" fill="#ff0000"/>
<circle cx="580.6" cy="1256.3" r="3.6" fill="#ff0000"/>
<circle cx="583.0" cy="1254.1" r="3.6" fill="#ff0000"/>
<circle cx="585.4" cy="1252.0" r="3.6" fill="#ff0000"/>
<circle cx="587.8" cy="1248.6" r="3.6" fill="#ff0000"/>
<circle cx="590.2" cy="1244.7" r="3.6" fill="#ff0000"/>
<circle cx="592.6" cy="1240.8" r="3.6" fill="#ff0000"/>
<circle cx="595.0" cy="1236.1" r="3.6" fill="#ff0000"/>
<circle cx="597.4" cy="1231.4" r="3.6" fill="#ff0000"/>
<circle cx="599.8" cy="1226.6" r="3.6" fill="#ff0000"/>
<circle cx="602.2" cy="1221.8" r="3.6" fill="#ff0000"/>
<circle cx="604.6" cy="1217.1" r="3.6" fill="#ff0000"/>
<circle cx="607.0" cy="1212.3" r="3.6" fill="#ff0000"/>
<circle cx="609.4" cy="1207.5" r="3.6" fill="#ff0000"/>
<circle cx="611.8" cy="1201.4" r="3.6" fill="#ff0000"/>
<circle cx="614.1" cy="1195.0" r="3.6" fill="#ff0000"/>
<circle cx="616.5" cy="1188.5" r="3.6" fill="#ff0000"/>
<circle cx="618.9" cy="1177.4" r="3.6" fill="#ff0000"/>
<circle cx="621.3" cy="1165.2" r="3.6" fill="#ff0000"/>
<circle cx="623.7" cy="1152.9" r="3.6" fill="#ff0000"/>
<circle cx="626.1" cy="1142.4" r="3.6" fill="#ff0000"/>
<circle cx="628.5" cy="1135.2" r="3.6" fill="#ff0000"/>
<circle cx="630.9" cy="1127.9" r="3.6" fill="#ff0000"/>
<circle cx="633.3" cy="1120.7" r="3.6" fill="#ff0000"/>
<circle cx="635.7" cy="1107.8" r="3.6" fill="#ff0000"/>
<circle cx="638.1" cy="1093.3" r="3.6" fill="#ff0000"/>
<circle cx="640.5" cy="1081.5" r="3.6" fill="#ff0000"/>
<circle cx="642.9" cy="1069.1" r="3.6" fill="#ff0000"/>
<circle cx="645.3" cy="1054.5" r="3.6" fill="#ff0000"/>
<circle cx="647.6" cy="1039.0" r="3.6" fill="#ff0000"/>
<circle cx="650.0" cy="1022.4" r="3.6" fill="#ff0000"/>
<circle cx="652.4" cy="1005.6" r="3.6" fill="#ff0000"/>
<circle cx="654.8" cy="988.6" r="3.6" fill="#ff0000"/>
<circle cx="657.2" cy="972.0" r="3.6" fill="#ff0000"/>
<circle cx="659.6" cy="955.6" r="3.6" fill="#ff0000"/>
<circle cx="662.0" cy="940.0" r="3.6" fill="#ff0000"/>
<circle cx="664.4" cy="924.4" r="3.6" fill="#ff0000"/>
<polyline fill="none" stroke="#f0f0f0" stroke-width="2" points="68.5,1330.2 70.9,1330.2 73.3,1330.2 75.7,1330.2 78.1,1330.2 80.5,1330.1 82.9,1330.1 85.3,1330.1 87.6,1330.1 90.0,1330.1 92.4,1330.1 94.8,1330.1 97.2,1330.1 99.6,1330.1 102.0,1330.0 104.4,1330.0 106.8,1330.0 109.2,1330.0 111.6,1330.0 114.0,1330.0 116.4,1330.0 118.8,1330.0 121.1,1329.9 123.5,1329.9 125.9,1329.9 128.3,1329.9 130.7,1329.9 133.1,1329.9 135.5,1329.9 137.9,1329.9 140.3,1329.9 142.7,1329.8 145.1,1329.8 147.5,1329.8 149.9,1329.8 152.3,1329.8 154.7,1329.8 157.0,1329.8 159.4,1329.8 161.8,1329.8 164.2,1329.7 166.6,1329.7 169.0,1329.7 171.4,1329.7 173.8,1329.7 176.2,1329.7 178.6,1329.7 181.0,1329.7 183.4,1329.6 185.8,1329.6 188.2,1329.6 190.6,1329.6 192.9,1329.6 195.3,1329.6 197.7,1329.6 200.1,1329.6 202.5,1329.6 204.9,1329.5 207.3,1329.5 209.7,1329.5 212.1,1329.5 214.5,1329.2 216.9,1328.2 219.3,1328.2 221.7,1328.2 224.1,1328.2 226.4,1328.2 228.8,1328.2 231.2,1328.2 233.6,1328.2 236.0,1328.2 238.4,1328.2 240.8,1328.1 243.2,1328.1 245.6,1328.1 248.0,1328.1 250.4,1328.1 252.8,1328.1 255.2,1328.1 257.6,1328.1 260.0,1328.1 262.3,1328.1 264.7,1328.1 267.1,1328.1 269.5,1328.1 271.9,1328.1 274.3,1328.1 276.7,1328.1 279.1,1328.1 281.5,1328.1 283.9,1328.1 286.3,1328.1 288.7,1328.0 291.1,1328.0 293.5,1328.0 295.9,1328.0 298.2,1328.0 300.6,1328.0 303.0,1328.0 305.4,1328.0 307.8,1328.0 310.2,1328.0 312.6,1328.0 315.0,1328.0 317.4,1328.0 319.8,1328.0 322.2,1328.0 324.6,1328.0 327.0,1328.0 329.4,1328.0 331.7,1328.0 334.1,1328.0 336.5,1328.0 338.9,1327.9 341.3,1327.9 343.7,1327.9 346.1,1327.9 348.5,1327.9 350.9,1327.9 353.3,1327.9 355.7,1327.9 358.1,1327.9 360.5,1327.9 362.9,1327.9 365.3,1327.9 367.6,1327.9 370.0,1327.9 372.4,1327.9 374.8,1327.9 377.2,1327.9 379.6,1327.9 382.0,1327.9 384.4,1327.9 386.8,1327.8 389.2,1327.8 391.6,1327.8 394.0,1327.8 396.4,1327.8 398.8,1327.8 401.2,1327.8 403.5,1327.8 405.9,1327.8 408.3,1327.8 410.7,1327.8 413.1,1327.8 415.5,1327.8 417.9,1327.8 420.3,1327.8 422.7,1327.8 425.1,1327.8 427.5,1327.8 429.9,1327.8 432.3,1327.8 434.7,1327.7 437.0,1327.7 439.4,1327.7 441.8,1327.7 444.2,1327.7 446.6,1327.7 449.0,1327.7 451.4,1327.7 453.8,1327.7 456.2,1327.7 458.6,1327.7 461.0,1327.7 463.4,1327.7 465.8,1327.7 468.2,1327.7 470.6,1327.7 472.9,1327.7 475.3,1327.7 477.7,1327.7 480.1,1327.7 482.5,1327.6 484.9,1327.6 487.3,1327.6 489.7,1327.6 492.1,1327.6 494.5,1327.6 496.9,1327.6 499.3,1327.6 501.7,1327.6 504.1,1327.6 506.5,1327.5 508.8,1326.8 511.2,1326.5 513.6,1326.5 516.0,1326.4 518.4,1326.4 520.8,1326.4 523.2,1326.4 525.6,1326.3 528.0,1326.3 530.4,1326.3 532.8,1326.3 535.2,1326.2 537.6,1326.2 540.0,1326.2 542.3,1326.2 544.7,1326.2 547.1,1326.1 549.5,1326.1 551.9,1326.1 554.3,1326.1 556.7,1326.0 559.1,1326.0 561.5,1326.0 563.9,1326.0 566.3,1325.9 568.7,1325.9 571.1,1325.9 573.5,1325.9 575.9,1325.8 578.2,1325.8 580.6,1325.8 583.0,1325.8 585.4,1325.7 587.8,1325.7 590.2,1325.7 592.6,1325.7 595.0,1325.6 597.4,1325.6 599.8,1325.6 602.2,1325.6 604.6,1325.6 607.0,1325.5 609.4,1325.5 611.8,1325.5 614.1,1325.4 616.5,1325.3 618.9,1325.3 621.3,1325.2 623.7,1325.2 626.1,1325.1 628.5,1325.1 630.9,1325.0 633.3,1325.0 635.7,1324.9 638.1,1324.9 640.5,1324.8 642.9,1324.7 645.3,1324.5 647.6,1324.4 650.0,1324.2 652.4,1324.1 654.8,1323.9 657.2,1323.7 659.6,1323.6 662.0,1323.4 664.4,1323.3"/>
<circle cx="68.5" cy="1330.2" r="3.2" fill="#eeeeee"/>
<circle cx="70.9" cy="1330.2" r="3.2" fill="#eeeeee"/>
<circle cx="73.3" cy="1330.2" r="3.2" fill="#eeeeee"/>
<circle cx="75.7" cy="1330.2" r="3.2" fill="#eeeeee"/>
<circle cx="78.1" cy="1330.2" r="3.2" fill="#eeeeee"/>
<circle cx="80.5" cy="1330.1" r="3.2" fill="#eeeeee"/>
<circle cx="82.9" cy="1330.1" r="3.2" fill="#eeeeee"/>
<circle cx="85.3" cy="1330.1" r="3.2" fill="#eeeeee"/>
<circle cx="87.6" cy="1330.1" r="3.2" fill="#eeeeee"/>
<circle cx="90.0" cy="1330.1" r="3.2" fill="#eeeeee"/>
<circle cx="92.4" cy="1330.1" r="3.2" fill="#eeeeee"/>
<circle cx="94.8" cy="1330.1" r="3.2" fill="#eeeeee"/>
<circle cx="97.2" cy="1330.1" r="3.2" fill="#eeeeee"/>
<circle cx="99.6" cy="1330.1" r="3.2" fill="#eeeeee"/>
<circle cx="102.0" cy="1330.0" r="3.2" fill="#eeeeee"/>
<circle cx="104.4" cy="1330.0" r="3.2" fill="#eeeeee"/>
<circle cx="106.8" cy="1330.0" r="3.2" fill="#eeeeee"/>
<circle cx="109.2" cy="1330.0" r="3.2" fill="#eeeeee"/>
<circle cx="111.6" cy="1330.0" r="3.2" fill="#eeeeee"/>
<circle cx="114.0" cy="1330.0" r="3.2" fill="#eeeeee"/>
<circle cx="116.4" cy="1330.0" r="3.2" fill="#eeeeee"/>
<circle cx="118.8" cy="1330.0" r="3.2" fill="#eeeeee"/>
<circle cx="121.1" cy="1329.9" r="3.2" fill="#eeeeee"/>
<circle cx="123.5" cy="1329.9" r="3.2" fill="#eeeeee"/>
<circle cx="125.9" cy="1329.9" r="3.2" fill="#eeeeee"/>
<circle cx="128.3" cy="1329.9" r="3.2" fill="#eeeeee"/>
<circle cx="130.7" cy="1329.9" r="3.2" fill="#eeeeee"/>
<circle cx="133.1" cy="1329.9" r="3.2" fill="#eeeeee"/>
<circle cx="135.5" cy="1329.9" r="3.2" fill="#eeeeee"/>
<circle cx="137.9" cy="1329.9" r="3.2" fill="#eeeeee"/>
<circle cx="140.3" cy="1329.9" r="3.2" fill="#eeeeee"/>
<circle cx="142.7" cy="1329.8" r="3.2" fill="#eeeeee"/>
<circle cx="145.1" cy="1329.8" r="3.2" fill="#eeeeee"/>
<circle cx="147.5" cy="1329.8" r="3.2" fill="#eeeeee"/>
<circle cx="149.9" cy="1329.8" r="3.2" fill="#eeeeee"/>
<circle cx="152.3" cy="1329.8" r="3.2" fill="#eeeeee"/>
<circle cx="154.7" cy="1329.8" r="3.2" fill="#eeeeee"/>
<circle cx="157.0" cy="1329.8" r="3.2" fill="#eeeeee"/>
<circle cx="159.4" cy="1329.8" r="3.2" fill="#eeeeee"/>
<circle cx="161.8" cy="1329.8" r="3.2" fill="#eeeeee"/>
<circle cx="164.2" cy="1329.7" r="3.2" fill="#eeeeee"/>
<circle cx="166.6" cy="1329.7" r="3.2" fill="#eeeeee"/>
<circle cx="169.0" cy="1329.7" r="3.2" fill="#eeeeee"/>
<circle cx="171.4" cy="1329.7" r="3.2" fill="#eeeeee"/>
<circle cx="173.8" cy="1329.7" r="3.2" fill="#eeeeee"/>
<circle cx="176.2" cy="1329.7" r="3.2" fill="#eeeeee"/>
<circle cx="178.6" cy="1329.7" r="3.2" fill="#eeeeee"/>
<circle cx="181.0" cy="1329.7" r="3.2" fill="#eeeeee"/>
<circle cx="183.4" cy="1329.6" r="3.2" fill="#eeeeee"/>
<circle cx="185.8" cy="1329.6" r="3.2" fill="#eeeeee"/>
<circle cx="188.2" cy="1329.6" r="3.2" fill="#eeeeee"/>
<circle cx="190.6" cy="1329.6" r="3.2" fill="#eeeeee"/>
<circle cx="192.9" cy="1329.6" r="3.2" fill="#eeeeee"/>
<circle cx="195.3" cy="1329.6" r="3.2" fill="#eeeeee"/>
<circle cx="197.7" cy="1329.6" r="3.2" fill="#eeeeee"/>
<circle cx="200.1" cy="1329.6" r="3.2" fill="#eeeeee"/>
<circle cx="202.5" cy="1329.6" r="3.2" fill="#eeeeee"/>
<circle cx="204.9" cy="1329.5" r="3.2" fill="#eeeeee"/>
<circle cx="207.3" cy="1329.5" r="3.2" fill="#eeeeee"/>
<circle cx="209.7" cy="1329.5" r="3.2" fill="#eeeeee"/>
<circle cx="212.1" cy="1329.5" r="3.2" fill="#eeeeee"/>
<circle cx="214.5" cy="1329.2" r="3.2" fill="#eeeeee"/>
<circle cx="216.9" cy="1328.2" r="3.2" fill="#eeeeee"/>
<circle cx="219.3" cy="1328.2" r="3.2" fill="#eeeeee"/>
<circle cx="221.7" cy="1328.2" r="3.2" fill="#eeeeee"/>
<circle cx="224.1" cy="1328.2" r="3.2" fill="#eeeeee"/>
<circle cx="226.4" cy="1328.2" r="3.2" fill="#eeeeee"/>
<circle cx="228.8" cy="1328.2" r="3.2" fill="#eeeeee"/>
<circle cx="231.2" cy="1328.2" r="3.2" fill="#eeeeee"/>
<circle cx="233.6" cy="1328.2" r="3.2" fill="#eeeeee"/>
<circle cx="236.0" cy="1328.2" r="3.2" fill="#eeeeee"/>
<circle cx="238.4" cy="1328.2" r="3.2" fill="#eeeeee"/>
<circle cx="240.8" cy="1328.1" r="3.2" fill="#eeeeee"/>
<circle cx="243.2" cy="1328.1" r="3.2" fill="#eeeeee"/>
<circle cx="245.6" cy="1328.1" r="3.2" fill="#eeeeee"/>
<circle cx="248.0" cy="1328.1" r="3.2" fill="#eeeeee"/>
<circle cx="250.4" cy="1328.1" r="3.2" fill="#eeeeee"/>
<circle cx="252.8" cy="1328.1" r="3.2" fill="#eeeeee"/>
<circle cx="255.2" cy="1328.1" r="3.2" fill="#eeeeee"/>
<circle cx="257.6" cy="1328.1" r="3.2" fill="#eeeeee"/>
<circle cx="260.0" cy="1328.1" r="3.2" fill="#eeeeee"/>
<circle cx="262.3" cy="1328.1" r="3.2" fill="#eeeeee"/>
<circle cx="264.7" cy="1328.1" r="3.2" fill="#eeeeee"/>
<circle cx="267.1" cy="1328.1" r="3.2" fill="#eeeeee"/>
<circle cx="269.5" cy="1328.1" r="3.2" fill="#eeeeee"/>
<circle cx="271.9" cy="1328.1" r="3.2" fill="#eeeeee"/>
<circle cx="274.3" cy="1328.1" r="3.2" fill="#eeeeee"/>
<circle cx="276.7" cy="1328.1" r="3.2" fill="#eeeeee"/>
<circle cx="279.1" cy="1328.1" r="3.2" fill="#eeeeee"/>
<circle cx="281.5" cy="1328.1" r="3.2" fill="#eeeeee"/>
<circle cx="283.9" cy="1328.1" r="3.2" fill="#eeeeee"/>
<circle cx="286.3" cy="1328.1" r="3.2" fill="#eeeeee"/>
<circle cx="288.7" cy="1328.0" r="3.2" fill="#eeeeee"/>
<circle cx="291.1" cy="1328.0" r="3.2" fill="#eeeeee"/>
<circle cx="293.5" cy="1328.0" r="3.2" fill="#eeeeee"/>
<circle cx="295.9" cy="1328.0" r="3.2" fill="#eeeeee"/>
<circle cx="298.2" cy="1328.0" r="3.2" fill="#eeeeee"/>
<circle cx="300.6" cy="1328.0" r="3.2" fill="#eeeeee"/>
<circle cx="303.0" cy="1328.0" r="3.2" fill="#eeeeee"/>
<circle cx="305.4" cy="1328.0" r="3.2" fill="#eeeeee"/>
<circle cx="307.8" cy="1328.0" r="3.2" fill="#eeeeee"/>
<circle cx="310.2" cy="1328.0" r="3.2" fill="#eeeeee"/>
<circle cx="312.6" cy="1328.0" r="3.2" fill="#eeeeee"/>
<circle cx="315.0" cy="1328.0" r="3.2" fill="#eeeeee"/>
<circle cx="317.4" cy="1328.0" r="3.2" fill="#eeeeee"/>
<circle cx="319.8" cy="1328.0" r="3.2" fill="#eeeeee"/>
<circle cx="322.2" cy="1328.0" r="3.2" fill="#eeeeee"/>
<circle cx="324.6" cy="1328.0" r="3.2" fill="#eeeeee"/>
<circle cx="327.0" cy="1328.0" r="3.2" fill="#eeeeee"/>
<circle cx="329.4" cy="1328.0" r="3.2" fill="#eeeeee"/>
<circle cx="331.7" cy="1328.0" r="3.2" fill="#eeeeee"/>
<circle cx="334.1" cy="1328.0" r="3.2" fill="#eeeeee"/>
<circle cx="336.5" cy="1328.0" r="3.2" fill="#eeeeee"/>
<circle cx="338.9" cy="1327.9" r="3.2" fill="#eeeeee"/>
<circle cx="341.3" cy="1327.9" r="3.2" fill="#eeeeee"/>
<circle cx="343.7" cy="1327.9" r="3.2" fill="#eeeeee"/>
<circle cx="346.1" cy="1327.9" r="3.2" fill="#eeeeee"/>
<circle cx="348.5" cy="1327.9" r="3.2" fill="#eeeeee"/>
<circle cx="350.9" cy="1327.9" r="3.2" fill="#eeeeee"/>
<circle cx="353.3" cy="1327.9" r="3.2" fill="#eeeeee"/>
<circle cx="355.7" cy="1327.9" r="3.2" fill="#eeeeee"/>
<circle cx="358.1" cy="1327.9" r="3.2" fill="#eeeeee"/>
<circle cx="360.5" cy="1327.9" r="3.2" fill="#eeeeee"/>
<circle cx="362.9" cy="1327.9" r="3.2" fill="#eeeeee"/>
<circle cx="365.3" cy="1327.9" r="3.2" fill="#eeeeee"/>
<circle cx="367.6" cy="1327.9" r="3.2" fill="#eeeeee"/>
<circle cx="370.0" cy="1327.9" r="3.2" fill="#eeeeee"/>
<circle cx="372.4" cy="1327.9" r="3.2" fill="#eeeeee"/>
<circle cx="374.8" cy="1327.9" r="3.2" fill="#eeeeee"/>
<circle cx="377.2" cy="1327.9" r="3.2" fill="#eeeeee"/>
<circle cx="379.6" cy="1327.9" r="3.2" fill="#eeeeee"/>
<circle cx="382.0" cy="1327.9" r="3.2" fill="#eeeeee"/>
<circle cx="384.4" cy="1327.9" r="3.2" fill="#eeeeee"/>
<circle cx="386.8" cy="1327.8" r="3.2" fill="#eeeeee"/>
<circle cx="389.2" cy="1327.8" r="3.2" fill="#eeeeee"/>
<circle cx="391.6" cy="1327.8" r="3.2" fill="#eeeeee"/>
<circle cx="394.0" cy="1327.8" r="3.2" fill="#eeeeee"/>
<circle cx="396.4" cy="1327.8" r="3.2" fill="#eeeeee"/>
<circle cx="398.8" cy="1327.8" r="3.2" fill="#eeeeee"/>
<circle cx="401.2" cy="1327.8" r="3.2" fill="#eeeeee"/>
<circle cx="403.5" cy="1327.8" r="3.2" fill="#eeeeee"/>
<circle cx="405.9" cy="1327.8" r="3.2" fill="#eeeeee"/>
<circle cx="408.3" cy="1327.8" r="3.2" fill="#eeeeee"/>
<circle cx="410.7" cy="1327.8" r="3.2" fill="#eeeeee"/>
<circle cx="413.1" cy="1327.8" r="3.2" fill="#eeeeee"/>
<circle cx="415.5" cy="1327.8" r="3.2" fill="#eeeeee"/>
<circle cx="417.9" cy="1327.8" r="3.2" fill="#eeeeee"/>
<circle cx="420.3" cy="1327.8" r="3.2" fill="#eeeeee"/>
<circle cx="422.7" cy="1327.8" r="3.2" fill="#eeeeee"/>
<circle cx="425.1" cy="1327.8" r="3.2" fill="#eeeeee"/>
<circle cx="427.5" cy="1327.8" r="3.2" fill="#eeeeee"/>
<circle cx="429.9" cy="1327.8" r="3.2" fill="#eeeeee"/>
<circle cx="432.3" cy="1327.8" r="3.2" fill="#eeeeee"/>
<circle cx="434.7" cy="1327.7" r="3.2" fill="#eeeeee"/>
<circle cx="437.0" cy="1327.7" r="3.2" fill="#eeeeee"/>
<circle cx="439.4" cy="1327.7" r="3.2" fill="#eeeeee"/>
<circle cx="441.8" cy="1327.7" r="3.2" fill="#eeeeee"/>
<circle cx="444.2" cy="1327.7" r="3.2" fill="#eeeeee"/>
<circle cx="446.6" cy="1327.7" r="3.2" fill="#eeeeee"/>
<circle cx="449.0" cy="1327.7" r="3.2" fill="#eeeeee"/>
<circle cx="451.4" cy="1327.7" r="3.2" fill="#eeeeee"/>
<circle cx="453.8" cy="1327.7" r="3.2" fill="#eeeeee"/>
<circle cx="456.2" cy="1327.7" r="3.2" fill="#eeeeee"/>
<circle cx="458.6" cy="1327.7" r="3.2" fill="#eeeeee"/>
<circle cx="461.0" cy="1327.7" r="3.2" fill="#eeeeee"/>
<circle cx="463.4" cy="1327.7" r="3.2" fill="#eeeeee"/>
<circle cx="465.8" cy="1327.7" r="3.2" fill="#eeeeee"/>
<circle cx="468.2" cy="1327.7" r="3.2" fill="#eeeeee"/>
<circle cx="470.6" cy="1327.7" r="3.2" fill="#eeeeee"/>
<circle cx="472.9" cy="1327.7" r="3.2" fill="#eeeeee"/>
<circle cx="475.3" cy="1327.7" r="3.2" fill="#eeeeee"/>
<circle cx="477.7" cy="1327.7" r="3.2" fill="#eeeeee"/>
<circle cx="480.1" cy="1327.7" r="3.2" fill="#eeeeee"/>
<circle cx="482.5" cy="1327.6" r="3.2" fill="#eeeeee"/>
<circle cx="484.9" cy="1327.6" r="3.2" fill="#eeeeee"/>
<circle cx="487.3" cy="1327.6" r="3.2" fill="#eeeeee"/>
<circle cx="489.7" cy="1327.6" r="3.2" fill="#eeeeee"/>
<circle cx="492.1" cy="1327.6" r="3.2" fill="#eeeeee"/>
<circle cx="494.5" cy="1327.6" r="3.2" fill="#eeeeee"/>
<circle cx="496.9" cy="1327.6" r="3.2" fill="#eeeeee"/>
<circle cx="499.3" cy="1327.6" r="3.2" fill="#eeeeee"/>
<circle cx="501.7" cy="1327.6" r="3.2" fill="#eeeeee"/>
<circle cx="504.1" cy="1327.6" r="3.2" fill="#eeeeee"/>
<circle cx="506.5" cy="1327.5" r="3.2" fill="#eeeeee"/>
<circle cx="508.8" cy="1326.8" r="3.2" fill="#eeeeee"/>
<circle cx="511.2" cy="1326.5" r="3.2" fill="#eeeeee"/>
<circle cx="513.6" cy="1326.5" r="3.2" fill="#eeeeee"/>
<circle cx="516.0" cy="1326.4" r="3.2" fill="#eeeeee"/>
<circle cx="518.4" cy="1326.4" r="3.2" fill="#eeeeee"/>
<circle cx="520.8" cy="1326.4" r="3.2" fill="#eeeeee"/>
<circle cx="523.2" cy="1326.4" r="3.2" fill="#eeeeee"/>
<circle cx="525.6" cy="1326.3" r="3.2" fill="#eeeeee"/>
<circle cx="528.0" cy="1326.3" r="3.2" fill="#eeeeee"/>
<circle cx="530.4" cy="1326.3" r="3.2" fill="#eeeeee"/>
<circle cx="532.8" cy="1326.3" r="3.2" fill="#eeeeee"/>
<circle cx="535.2" cy="1326.2" r="3.2" fill="#eeeeee"/>
<circle cx="537.6" cy="1326.2" r="3.2" fill="#eeeeee"/>
<circle cx="540.0" cy="1326.2" r="3.2" fill="#eeeeee"/>
<circle cx="542.3" cy="1326.2" r="3.2" fill="#eeeeee"/>
<circle cx="544.7" cy="1326.2" r="3.2" fill="#eeeeee"/>
<circle cx="547.1" cy="1326.1" r="3.2" fill="#eeeeee"/>
<circle cx="549.5" cy="1326.1" r="3.2" fill="#eeeeee"/>
<circle cx="551.9" cy="1326.1" r="3.2" fill="#eeeeee"/>
<circle cx="554.3" cy="1326.1" r="3.2" fill="#eeeeee"/>
<circle cx="556.7" cy="1326.0" r="3.2" fill="#eeeeee"/>
<circle cx="559.1" cy="1326.0" r="3.2" fill="#eeeeee"/>
<circle cx="561.5" cy="1326.0" r="3.2" fill="#eeeeee"/>
<circle cx="563.9" cy="1326.0" r="3.2" fill="#eeeeee"/>
<circle cx="566.3" cy="1325.9" r="3.2" fill="#eeeeee"/>
<circle cx="568.7" cy="1325.9" r="3.2" fill="#eeeeee"/>
<circle cx="571.1" cy="1325.9" r="3.2" fill="#eeeeee"/>
<circle cx="573.5" cy="1325.9" r="3.2" fill="#eeeeee"/>
<circle cx="575.9" cy="1325.8" r="3.2" fill="#eeeeee"/>
<circle cx="578.2" cy="1325.8" r="3.2" fill="#eeeeee"/>
<circle cx="580.6" cy="1325.8" r="3.2" fill="#eeeeee"/>
<circle cx="583.0" cy="1325.8" r="3.2" fill="#eeeeee"/>
<circle cx="585.4" cy="1325.7" r="3.2" fill="#eeeeee"/>
<circle cx="587.8" cy="1325.7" r="3.2" fill="#eeeeee"/>
<circle cx="590.2" cy="1325.7" r="3.2" fill="#eeeeee"/>
<circle cx="592.6" cy="1325.7" r="3.2" fill="#eeeeee"/>
<circle cx="595.0" cy="1325.6" r="3.2" fill="#eeeeee"/>
<circle cx="597.4" cy="1325.6" r="3.2" fill="#eeeeee"/>
<circle cx="599.8" cy="1325.6" r="3.2" fill="#eeeeee"/>
<circle cx="602.2" cy="1325.6" r="3.2" fill="#eeeeee"/>
<circle cx="604.6" cy="1325.6" r="3.2" fill="#eeeeee"/>
<circle cx="607.0" cy="1325.5" r="3.2" fill="#eeeeee"/>
<circle cx="609.4" cy="1325.5" r="3.2" fill="#eeeeee"/>
<circle cx="611.8" cy="1325.5" r="3.2" fill="#eeeeee"/>
<circle cx="614.1" cy="1325.4" r="3.2" fill="#eeeeee"/>
<circle cx="616.5" cy="1325.3" r="3.2" fill="#eeeeee"/>
<circle cx="618.9" cy="1325.3" r="3.2" fill="#eeeeee"/>
<circle cx="621.3" cy="1325.2" r="3.2" fill="#eeeeee"/>
<circle cx="623.7" cy="1325.2" r="3.2" fill="#eeeeee"/>
<circle cx="626.1" cy="1325.1" r="3.2" fill="#eeeeee"/>
<circle cx="628.5" cy="1325.1" r="3.2" fill="#eeeeee"/>
<circle cx="630.9" cy="1325.0" r="3.2" fill="#eeeeee"/>
<circle cx="633.3" cy="1325.0" r="3.2" fill="#eeeeee"/>
<circle cx="635.7" cy="1324.9" r="3.2" fill="#eeeeee"/>
<circle cx="638.1" cy="1324.9" r="3.2" fill="#eeeeee"/>
<circle cx="640.5" cy="1324.8" r="3.2" fill="#eeeeee"/>
<circle cx="642.9" cy="1324.7" r="3.2" fill="#eeeeee"/>
<circle cx="645.3" cy="1324.5" r="3.2" fill="#eeeeee"/>
<circle cx="647.6" cy="1324.4" r="3.2" fill="#eeeeee"/>
<circle cx="650.0" cy="1324.2" r="3.2" fill="#eeeeee"/>
<circle cx="652.4" cy="1324.1" r="3.2" fill="#eeeeee"/>
<circle cx="654.8" cy="1323.9" r="3.2" fill="#eeeeee"/>
<circle cx="657.2" cy="1323.7" r="3.2" fill="#eeeeee"/>
<circle cx="659.6" cy="1323.6" r="3.2" fill="#eeeeee"/>
<circle cx="662.0" cy="1323.4" r="3.2" fill="#eeeeee"/>
<circle cx="664.4" cy="1323.3" r="3.2" fill="#eeeeee"/>
<circle cx="68" cy="895" r="9" fill="#ffffff" stroke="#d0d0d0" stroke-width="0.5"/>
<line x1="66.5" y1="890" x2="66.5" y2="900" stroke="#888" stroke-width="1"/>
<line x1="69.5" y1="890" x2="69.5" y2="900" stroke="#888" stroke-width="1"/>
<circle cx="665" cy="895" r="9" fill="#ffffff" stroke="#d0d0d0" stroke-width="0.5"/>
<line x1="663.5" y1="890" x2="663.5" y2="900" stroke="#888" stroke-width="1"/>
<line x1="666.5" y1="890" x2="666.5" y2="900" stroke="#888" stroke-width="1"/>
<circle cx="294.5" cy="1379.5" r="7.5" fill="#ff0000"/>
<text x="307.0" y="1382.5" font-size="9.00" fill="#cfcfcf" text-anchor="start" textLength="55.0" lengthAdjust="spacingAndGlyphs">Potwierdzone</text>
<circle cx="384.5" cy="1379.5" r="7.5" fill="#eeeeee"/>
<text x="397.0" y="1382.5" font-size="9.00" fill="#cfcfcf" text-anchor="start" textLength="44.0" lengthAdjust="spacingAndGlyphs">Śmiertelne</text>
<rect x="21" y="1406" width="667" height="30" fill="#222222"/>
<path d="M21.5,1406 L21.5,1435.5 L687.5,1435.5 L687.5,1406" fill="none" stroke="#444" stroke-width="1"/>
<path d="M38.5,1414.5 L32.5,1420.5 L38.5,1427 Z" fill="none" stroke="#cfcfcf" stroke-width="1.2"/>
<path d="M669.5,1414.5 L675.5,1420.5 L669.5,1427 Z" fill="none" stroke="#cfcfcf" stroke-width="1.2"/>
<text x="354.0" y="1424.0" font-size="12.20" fill="#d8d8d8" text-anchor="middle">Przypadki dla Polski w czasie</text>
<svg x="708" y="40" width="1135" height="1078" viewBox="708 40 1135 1078" overflow="hidden">
<rect x="708" y="40" width="1135" height="1078" fill="#393939"/>
<polygon points="708.0,40.0 1461.0,40.0 1472.1,66.6 1469.0,119.7 1416.7,121.9 1350.3,116.2 1359.2,146.3 1345.9,181.7 1328.2,201.7 1239.6,217.2 1062.4,239.3 885.2,305.8 836.5,296.9 827.6,279.2 809.9,270.3 796.6,248.2 778.9,234.9 783.3,212.8 765.6,186.2 778.9,168.5 752.3,157.4 734.6,168.5 708.0,195.0" fill="#1f2326"/>
<polygon points="708.0,40.0 827.6,40.0 805.5,46.2 761.2,49.7 708.0,51.1" fill="#393939"/>
<polygon points="874.1,62.1 911.8,84.3 914.0,102.0 909.6,107.3 876.3,93.2" fill="#393939"/>
<polyline points="1461.0,40.0 1443.3,66.6 1416.7,106.4" fill="none" stroke="#4a4a4a" stroke-width="1.2"/>
<polygon points="792.8,285.8 809.8,280.9 829.2,285.8 834,295.5 829.2,305.2 814.7,300.3 800.1,293" fill="#1f2326"/>
<polyline points="708.0,792.6 743.4,766.0 787.7,748.3 823.2,726.2 840.9,708.5 863.0,712.9 885.2,732.8" fill="none" stroke="#323232" stroke-width="1.3" stroke-linejoin="round"/>
<polyline points="708.0,947.7 734.6,965.4 770.0,1000.8 805.5,1040.7 840.9,1067.3 885.2,1062.8 902.9,996.4 973.8,996.4 1026.9,1023.0 1062.4,1045.1 1075.7,1089.4 1075.7,1116.9" fill="none" stroke="#323232" stroke-width="1.3" stroke-linejoin="round"/>
<polyline points="1075.7,1045.1 1106.7,1018.5 1151.0,1000.8 1186.4,978.7 1217.4,929.9 1261.7,916.7" fill="none" stroke="#323232" stroke-width="1.3" stroke-linejoin="round"/>
<polyline points="1075.7,1089.4 1128.8,1093.8 1195.3,1071.7 1283.9,1080.6 1372.5,1067.3 1461.0,1058.4 1549.6,1023.0 1576.2,992.0" fill="none" stroke="#323232" stroke-width="1.3" stroke-linejoin="round"/>
<polyline points="1576.2,992.0 1549.6,1040.7 1540.8,1071.7 1527.5,1116.9" fill="none" stroke="#323232" stroke-width="1.3" stroke-linejoin="round"/>
<polyline points="1726.8,748.3 1771.1,726.2 1815.4,730.6 1842.0,721.7" fill="none" stroke="#323232" stroke-width="1.3" stroke-linejoin="round"/>
<polyline points="1602.8,916.7 1660.4,934.4 1704.7,925.5 1771.1,965.4 1842.0,978.7" fill="none" stroke="#323232" stroke-width="1.3" stroke-linejoin="round"/>
<polyline points="1660.4,1005.2 1704.7,1023.0 1749.0,1067.3 1793.3,1089.4 1842.0,1098.3" fill="none" stroke="#323232" stroke-width="1.3" stroke-linejoin="round"/>
<polyline points="708.0,624.3 734.6,655.3 787.7,650.9 840.9,642.0 854.2,602.1" fill="none" stroke="#323232" stroke-width="1.3" stroke-linejoin="round"/>
<polyline points="708.0,1009.7 774.4,996.4 840.9,929.9 894.0,925.5 956.1,978.7" fill="none" stroke="#323232" stroke-width="1.3" stroke-linejoin="round"/>




<polyline points="1480.7,55.0 1514.3,69.9 1544.3,88.6 1596.6,99.8 1611.6,126.0 1604.1,155.9 1600.4,174.6 1611.6,200.8" fill="none" stroke="#323232" stroke-width="1.3" stroke-linejoin="round"/>
<polyline points="1678.9,264.4 1723.8,256.9 1761.2,268.1 1798.6,249.4 1817.3,230.7 1844.9,215.8" fill="none" stroke="#323232" stroke-width="1.3" stroke-linejoin="round"/>
<polyline points="1712.5,458.8 1731.2,451.4 1772.4,440.1 1798.6,428.9 1844.9,421.5" fill="none" stroke="#323232" stroke-width="1.3" stroke-linejoin="round"/>
<polyline points="1742.5,40.0 1761.2,96.1 1817.3,152.2 1844.9,174.6" fill="none" stroke="#323232" stroke-width="1.3" stroke-linejoin="round"/>
<text x="1710.0" y="53.0" font-size="11.00" fill="#555" text-anchor="middle" stroke="#2a2a2a" stroke-width="2" paint-order="stroke" letter-spacing="4">LITHUANIA</text>
<text x="1564.0" y="70.0" font-size="10.00" fill="#6b6b6b" text-anchor="middle" stroke="#2a2a2a" stroke-width="2" paint-order="stroke">Taurage</text>
<text x="1712.0" y="126.0" font-size="11.00" fill="#7a7a7a" text-anchor="middle" font-weight="bold" stroke="#2a2a2a" stroke-width="2" paint-order="stroke">Kaunas</text>
<text x="1402.0" y="155.0" font-size="11.50" fill="#858585" text-anchor="middle" font-weight="bold" stroke="#2a2a2a" stroke-width="2" paint-order="stroke">Kaliningrad</text>
<text x="1510.0" y="156.0" font-size="10.50" fill="#555" text-anchor="middle" stroke="#2a2a2a" stroke-width="2" paint-order="stroke" letter-spacing="4">RUSSIA</text>
<text x="1834.0" y="158.0" font-size="11.00" fill="#7a7a7a" text-anchor="middle" font-weight="bold" stroke="#2a2a2a" stroke-width="2" paint-order="stroke">Vilni</text>
<text x="1660.0" y="180.0" font-size="10.00" fill="#6b6b6b" text-anchor="middle" stroke="#2a2a2a" stroke-width="2" paint-order="stroke">Marijampole</text>
<text x="1723.0" y="204.0" font-size="10.00" fill="#6b6b6b" text-anchor="middle" stroke="#2a2a2a" stroke-width="2" paint-order="stroke">Alytus</text>
<text x="908.0" y="171.0" font-size="11.00" fill="#4a4e52" text-anchor="middle" stroke="#2a2a2a" stroke-width="2" paint-order="stroke" letter-spacing="2.5" font-style="italic">Baltic</text>
<text x="908.0" y="189.0" font-size="11.00" fill="#4a4e52" text-anchor="middle" stroke="#2a2a2a" stroke-width="2" paint-order="stroke" letter-spacing="2.5" font-style="italic">Sea</text>
<text x="1812.0" y="302.0" font-size="9.50" fill="#555" text-anchor="middle" stroke="#2a2a2a" stroke-width="2" paint-order="stroke" letter-spacing="2">HRODZYENSK</text>
<text x="1812.0" y="314.0" font-size="9.50" fill="#555" text-anchor="middle" stroke="#2a2a2a" stroke-width="2" paint-order="stroke" letter-spacing="2">VOBLASTS</text>
<text x="1722.0" y="318.0" font-size="11.00" fill="#7a7a7a" text-anchor="middle" font-weight="bold" stroke="#2a2a2a" stroke-width="2" paint-order="stroke">Hronda</text>
<text x="732.0" y="302.0" font-size="10.00" fill="#555" text-anchor="middle" stroke="#2a2a2a" stroke-width="2" paint-order="stroke" letter-spacing="2">ATERN</text>
<text x="752.0" y="492.0" font-size="11.00" fill="#777" text-anchor="middle" font-weight="bold" stroke="#2a2a2a" stroke-width="2" paint-order="stroke">Berlin</text>
<text x="724.0" y="509.0" font-size="10.00" fill="#6b6b6b" text-anchor="middle" stroke="#2a2a2a" stroke-width="2" paint-order="stroke">Potsdam</text>
<text x="805.0" y="504.0" font-size="9.50" fill="#555" text-anchor="middle" stroke="#2a2a2a" stroke-width="2" paint-order="stroke" letter-spacing="2">BRANDENBURG</text>
<text x="1726.0" y="555.0" font-size="10.50" fill="#7a7a7a" text-anchor="middle" stroke="#2a2a2a" stroke-width="2" paint-order="stroke">Brest</text>
<text x="839.0" y="604.0" font-size="10.00" fill="#6b6b6b" text-anchor="middle" stroke="#2a2a2a" stroke-width="2" paint-order="stroke">Cottbus</text>
<text x="786.0" y="707.0" font-size="11.50" fill="#777" text-anchor="middle" font-weight="bold" stroke="#2a2a2a" stroke-width="2" paint-order="stroke">Dresden</text>
<text x="724.0" y="739.0" font-size="10.00" fill="#6b6b6b" text-anchor="middle" stroke="#2a2a2a" stroke-width="2" paint-order="stroke">mnitz</text>
<text x="813.0" y="757.0" font-size="10.00" fill="#6b6b6b" text-anchor="middle" stroke="#2a2a2a" stroke-width="2" paint-order="stroke">Usti nad</text>
<text x="813.0" y="769.0" font-size="10.00" fill="#6b6b6b" text-anchor="middle" stroke="#2a2a2a" stroke-width="2" paint-order="stroke">Labem</text>
<text x="906.0" y="748.0" font-size="10.00" fill="#6b6b6b" text-anchor="middle" stroke="#2a2a2a" stroke-width="2" paint-order="stroke">Liberec</text>
<text x="976.0" y="822.0" font-size="10.00" fill="#6b6b6b" text-anchor="middle" stroke="#2a2a2a" stroke-width="2" paint-order="stroke">Hradec</text>
<text x="976.0" y="834.0" font-size="10.00" fill="#6b6b6b" text-anchor="middle" stroke="#2a2a2a" stroke-width="2" paint-order="stroke">Kralove</text>
<text x="972.0" y="853.0" font-size="10.00" fill="#6b6b6b" text-anchor="middle" stroke="#2a2a2a" stroke-width="2" paint-order="stroke">Pardubice</text>
<text x="849.0" y="847.0" font-size="12.00" fill="#7a7a7a" text-anchor="middle" font-weight="bold" stroke="#2a2a2a" stroke-width="2" paint-order="stroke">Prague</text>
<text x="717.0" y="825.0" font-size="10.00" fill="#6b6b6b" text-anchor="middle" stroke="#2a2a2a" stroke-width="2" paint-order="stroke">bad</text>
<text x="753.0" y="894.0" font-size="10.00" fill="#6b6b6b" text-anchor="middle" stroke="#2a2a2a" stroke-width="2" paint-order="stroke">Plisen</text>
<text x="965.0" y="913.0" font-size="11.00" fill="#555" text-anchor="middle" stroke="#2a2a2a" stroke-width="2" paint-order="stroke" letter-spacing="4">CZECHIA</text>
<text x="1200.0" y="881.0" font-size="12.00" fill="#7a7a7a" text-anchor="middle" font-weight="bold" stroke="#2a2a2a" stroke-width="2" paint-order="stroke">Ostrava</text>
<text x="1105.0" y="915.0" font-size="10.00" fill="#6b6b6b" text-anchor="middle" stroke="#2a2a2a" stroke-width="2" paint-order="stroke">Olomouc</text>
<text x="954.0" y="943.0" font-size="10.00" fill="#6b6b6b" text-anchor="middle" stroke="#2a2a2a" stroke-width="2" paint-order="stroke">Jihlava</text>
<text x="1046.0" y="971.0" font-size="12.00" fill="#7a7a7a" text-anchor="middle" font-weight="bold" stroke="#2a2a2a" stroke-width="2" paint-order="stroke">Brno</text>
<text x="1143.0" y="967.0" font-size="10.00" fill="#6b6b6b" text-anchor="middle" stroke="#2a2a2a" stroke-width="2" paint-order="stroke">Zlin</text>
<text x="1242.0" y="967.0" font-size="10.00" fill="#6b6b6b" text-anchor="middle" stroke="#2a2a2a" stroke-width="2" paint-order="stroke">Zilina</text>
<text x="853.0" y="1001.0" font-size="10.00" fill="#6b6b6b" text-anchor="middle" stroke="#2a2a2a" stroke-width="2" paint-order="stroke">Budweis</text>
<text x="1468.0" y="999.0" font-size="10.00" fill="#6b6b6b" text-anchor="middle" stroke="#2a2a2a" stroke-width="2" paint-order="stroke">Presov</text>
<text x="1177.0" y="1013.0" font-size="10.00" fill="#6b6b6b" text-anchor="middle" stroke="#2a2a2a" stroke-width="2" paint-order="stroke">Trencin</text>
<text x="1276.0" y="1029.0" font-size="10.00" fill="#6b6b6b" text-anchor="middle" stroke="#2a2a2a" stroke-width="2" paint-order="stroke">Banska</text>
<text x="1276.0" y="1041.0" font-size="10.00" fill="#6b6b6b" text-anchor="middle" stroke="#2a2a2a" stroke-width="2" paint-order="stroke">Bystrica</text>
<text x="1469.0" y="1037.0" font-size="10.00" fill="#6b6b6b" text-anchor="middle" stroke="#2a2a2a" stroke-width="2" paint-order="stroke">Kosice</text>
<text x="1563.0" y="1050.0" font-size="10.00" fill="#6b6b6b" text-anchor="middle" stroke="#2a2a2a" stroke-width="2" paint-order="stroke">Uzhhorod</text>
<text x="1785.0" y="1009.0" font-size="10.00" fill="#6b6b6b" text-anchor="middle" stroke="#2a2a2a" stroke-width="2" paint-order="stroke">Ivano-Frankivsk</text>
<text x="1790.0" y="1032.0" font-size="9.50" fill="#555" text-anchor="middle" stroke="#2a2a2a" stroke-width="2" paint-order="stroke" letter-spacing="2">IVANO-FRANKIVSK</text>
<text x="1790.0" y="1044.0" font-size="9.50" fill="#555" text-anchor="middle" stroke="#2a2a2a" stroke-width="2" paint-order="stroke" letter-spacing="2">OBLAST</text>
<text x="1653.0" y="1074.0" font-size="9.50" fill="#555" text-anchor="middle" stroke="#2a2a2a" stroke-width="2" paint-order="stroke" letter-spacing="2">ZAKARPATTIA</text>
<text x="1653.0" y="1086.0" font-size="9.50" fill="#555" text-anchor="middle" stroke="#2a2a2a" stroke-width="2" paint-order="stroke" letter-spacing="2">OBLAST</text>
<text x="1722.0" y="882.0" font-size="10.50" fill="#6b6b6b" text-anchor="middle" stroke="#2a2a2a" stroke-width="2" paint-order="stroke">Lviv</text>
<text x="1799.0" y="680.0" font-size="9.50" fill="#555" text-anchor="middle" stroke="#2a2a2a" stroke-width="2" paint-order="stroke" letter-spacing="2">VOLYN</text>
<text x="1799.0" y="692.0" font-size="9.50" fill="#555" text-anchor="middle" stroke="#2a2a2a" stroke-width="2" paint-order="stroke" letter-spacing="2">OBLAST</text>
<text x="1136.0" y="1084.0" font-size="10.00" fill="#6b6b6b" text-anchor="middle" stroke="#2a2a2a" stroke-width="2" paint-order="stroke">Trnava</text>
<text x="1182.0" y="1092.0" font-size="10.00" fill="#6b6b6b" text-anchor="middle" stroke="#2a2a2a" stroke-width="2" paint-order="stroke">Nitra</text>
<text x="836.0" y="1094.0" font-size="10.00" fill="#6b6b6b" text-anchor="middle" stroke="#2a2a2a" stroke-width="2" paint-order="stroke">Linz</text>
<text x="957.0" y="1107.0" font-size="10.00" fill="#6b6b6b" text-anchor="middle" stroke="#2a2a2a" stroke-width="2" paint-order="stroke">St Polten</text>
<text x="1025.0" y="1108.0" font-size="12.00" fill="#7a7a7a" text-anchor="middle" font-weight="bold" stroke="#2a2a2a" stroke-width="2" paint-order="stroke">Vienna</text>
<text x="1092.0" y="1115.0" font-size="12.00" fill="#7a7a7a" text-anchor="middle" font-weight="bold" stroke="#2a2a2a" stroke-width="2" paint-order="stroke">Bratislava</text>
<text x="810.0" y="1110.0" font-size="9.50" fill="#555" text-anchor="middle" stroke="#2a2a2a" stroke-width="2" paint-order="stroke" letter-spacing="2">URKEN</text>
<polygon points="829.5,275.6 865.1,263.6 917.4,241.9 969.8,223.2 1003.4,210.2 1025.9,197.1 1037.1,181.4 1057.7,175.4 1067.0,189.6 1070.8,219.5 1061.4,230.7 1067.0,256.9 1076.4,279.3 1080.1,298.0 1072.6,320.5 1033.4,344.8 1044.6,357.9 1053.9,369.1 1044.6,384.1 1025.9,399.0 1007.2,410.2 992.2,414.0 988.5,399.0 977.3,402.8 932.4,417.7 924.9,428.9 887.5,436.4 883.8,451.4 865.1,470.1 838.9,447.6 822.1,442.0 823.9,421.5 842.6,414.0 848.2,376.6 846.4,339.2 837.0,301.8" fill="#d8806a" stroke="#d8806a" stroke-width="3" stroke-linejoin="round"/>
<polygon points="1057.7,175.4 1082.0,167.2 1100.7,154.1 1119.4,146.6 1156.8,136.5 1186.7,133.5 1209.1,133.5 1212.9,148.5 1220.3,174.6 1227.8,197.1 1242.8,206.4 1274.9,210.2 1275.0,209.0 1297.4,204.5 1323.6,194.1 1290.0,221.4 1286.2,245.7 1310.5,273.7 1304.9,294.3 1278.7,324.2 1272.7,328.0 1246.5,324.2 1239.0,316.7 1212.9,309.3 1194.2,303.6 1179.2,298.0 1164.2,301.8 1153.0,309.3 1134.3,328.0 1119.4,324.2 1113.8,339.2 1082.0,335.4 1072.6,320.5 1080.1,298.0 1076.4,279.3 1067.0,256.9 1061.4,230.7 1070.8,219.5 1067.0,189.6" fill="#d5614a" stroke="#d5614a" stroke-width="3" stroke-linejoin="round"/>
<polygon points="1323.6,194.1 1387.2,200.8 1462.0,211.3 1536.8,210.2 1613.4,202.7 1604.1,215.8 1585.4,227.0 1596.6,249.4 1604.1,279.3 1596.6,301.8 1566.7,316.7 1536.8,339.2 1503.1,344.8 1484.4,354.1 1454.5,365.4 1439.0,364.8 1421.0,370.2 1397.6,379.2 1387.7,393.6 1365.2,392.7 1350.8,393.6 1345.4,385.5 1340.0,390.0 1331.0,394.0 1329.2,382.8 1326.5,368.4 1311.2,364.8 1287.8,354.0 1284.2,340.5 1278.7,324.2 1304.9,294.3 1310.5,273.7 1286.2,245.7 1290.0,221.4" fill="#d7a28c" stroke="#d7a28c" stroke-width="3" stroke-linejoin="round"/>
<polygon points="1613.4,202.7 1634.0,212.0 1663.9,230.7 1675.1,249.4 1677.0,264.4 1678.9,301.8 1690.1,339.2 1701.3,376.6 1710.7,395.3 1713.3,418.3 1711.7,430.5 1714.8,457.9 1696.5,474.6 1682.8,479.2 1664.5,491.4 1652.3,506.6 1646.2,521.9 1642.4,524.9 1632.5,518.8 1618.8,512.7 1591.4,508.1 1585.3,494.4 1576.2,471.6 1576.2,448.7 1564.0,441.1 1560.9,436.6 1539.6,435.0 1536.6,422.8 1530.5,407.6 1522.8,400.0 1510.6,369.1 1503.1,344.8 1536.8,339.2 1566.7,316.7 1596.6,301.8 1604.1,279.3 1596.6,249.4 1585.4,227.0 1604.1,215.8" fill="#d7a28c" stroke="#d7a28c" stroke-width="3" stroke-linejoin="round"/>
<polygon points="1503.1,344.8 1510.6,369.1 1522.8,400.0 1530.5,407.6 1536.6,422.8 1539.6,435.0 1560.9,436.6 1564.0,441.1 1576.2,448.7 1576.2,471.6 1585.3,494.4 1591.4,508.1 1618.8,512.7 1632.5,518.8 1642.4,524.9 1634.0,537.1 1621.9,552.3 1597.5,560.0 1568.5,561.5 1530.5,566.0 1527.4,582.8 1530.5,593.4 1524.4,605.6 1521.0,614.2 1505.3,618.2 1518.4,632.6 1523.7,643.2 1518.4,658.9 1518.4,680.0 1518.4,703.7 1492.1,706.3 1478.9,690.5 1460.5,685.3 1444.7,685.3 1434.2,677.4 1413.2,680.0 1400.0,664.2 1394.7,645.8 1402.6,640.5 1402.6,632.6 1392.1,616.8 1410.5,611.6 1413.2,590.5 1400.0,580.0 1384.2,574.7 1376.3,556.3 1360.5,532.6 1344.7,522.1 1323.7,522.1 1302.6,511.6 1292.1,506.3 1297.4,485.3 1305.3,466.8 1302.6,443.2 1307.9,427.4 1323.7,414.2 1326.3,401.0 1331.0,394.0 1340.0,390.0 1345.4,385.5 1350.8,393.6 1365.2,392.7 1387.7,393.6 1397.6,379.2 1421.0,370.2 1439.0,364.8 1454.5,365.4 1484.4,354.1" fill="#8f171c" stroke="#8f171c" stroke-width="3" stroke-linejoin="round"/>
<polygon points="1119.4,324.2 1134.3,328.0 1153.0,309.3 1164.2,301.8 1179.2,298.0 1194.2,303.6 1212.9,309.3 1239.0,316.7 1246.5,324.2 1272.7,328.0 1278.7,324.2 1284.2,340.5 1287.8,354.0 1311.2,364.8 1326.5,368.4 1329.2,382.8 1331.0,394.0 1326.3,401.0 1323.7,414.2 1307.9,427.4 1302.6,443.2 1305.3,466.8 1297.4,485.3 1292.1,506.3 1268.4,514.2 1250.0,514.2 1236.8,503.7 1215.8,495.8 1207.9,490.5 1184.2,487.9 1165.8,477.4 1150.0,472.1 1141.8,470.0 1123.0,451.4 1126.9,432.7 1111.9,414.0 1111.9,395.3 1119.4,376.6 1108.2,357.9 1113.8,339.2" fill="#d5614a" stroke="#d5614a" stroke-width="3" stroke-linejoin="round"/>
<polygon points="1072.6,320.5 1082.0,335.4 1113.8,339.2 1108.1,357.9 1119.4,376.6 1111.9,395.3 1111.9,414.0 1126.8,432.7 1123.1,451.4 1141.8,470.1 1150.0,472.1 1165.8,477.4 1184.2,487.9 1207.9,490.5 1215.8,495.8 1236.8,503.7 1250.0,514.2 1268.4,514.2 1271.0,530.0 1255.3,537.9 1242.1,553.7 1239.5,572.1 1218.4,590.5 1213.2,611.6 1202.6,630.0 1189.5,648.4 1184.2,669.5 1189.5,685.3 1194.0,693.0 1179.0,689.0 1156.8,687.1 1149.0,653.5 1134.3,646.0 1130.6,627.3 1111.9,619.8 1100.7,627.3 1074.5,627.3 1059.5,612.4 1033.4,601.1 1025.9,597.4 1018.4,582.4 1003.4,575.0 992.2,560.0 981.0,544.9 981.0,518.7 973.5,470.0 986.6,451.4 992.2,414.0 1007.2,410.2 1025.9,399.0 1044.6,384.1 1053.9,369.1 1044.6,357.9 1033.4,344.8" fill="#bf2d27" stroke="#bf2d27" stroke-width="3" stroke-linejoin="round"/>
<polygon points="865.1,470.1 883.8,451.4 887.5,436.4 924.9,428.9 932.4,417.7 977.3,402.8 988.5,399.0 992.2,414.0 986.6,451.4 973.5,470.1 981.0,518.7 981.0,544.9 992.2,560.0 1003.4,575.0 1018.4,582.4 1025.9,597.4 1018.4,608.6 1003.4,608.6 984.7,601.1 969.8,623.6 951.1,634.8 932.4,638.5 917.4,649.8 900.6,653.5 876.3,627.3 865.1,589.9 872.5,560.0 872.5,537.4 861.3,507.5 872.5,488.8" fill="#d7a28c" stroke="#d7a28c" stroke-width="3" stroke-linejoin="round"/>
<polygon points="900.6,653.5 917.4,649.8 932.4,638.5 951.1,634.8 969.8,623.6 984.7,601.1 1003.4,608.6 1018.4,608.6 1025.9,597.4 1033.4,601.1 1059.5,612.4 1074.5,627.3 1100.7,627.3 1111.9,619.8 1130.6,627.3 1134.3,646.0 1149.3,653.5 1156.8,687.2 1134.3,690.9 1111.9,724.5 1100.7,761.9 1085.7,788.1 1072.6,791.9 1078.2,803.1 1082.0,821.8 1074.5,818.0 1059.5,840.5 1052.1,836.7 1037.1,814.3 1010.9,791.9 1029.6,776.9 1025.9,765.7 992.2,765.7 969.8,750.7 936.1,743.2 924.9,728.3 917.4,713.3 902.5,709.6 902.5,730.2 883.8,732.0 895.0,717.1 902.5,679.7" fill="#d5614a" stroke="#d5614a" stroke-width="3" stroke-linejoin="round"/>
<polygon points="1156.8,687.2 1179.2,689.0 1194.2,692.8 1220.3,698.4 1231.6,704.0 1224.1,732.0 1220.3,754.5 1227.8,776.9 1216.6,784.4 1209.1,803.1 1201.6,829.3 1182.9,844.2 1168.0,859.2 1145.5,836.7 1149.3,818.0 1119.4,818.0 1100.7,803.1 1089.5,795.6 1085.7,788.1 1100.7,761.9 1111.9,724.5 1134.3,690.9" fill="#d7a28c" stroke="#d7a28c" stroke-width="3" stroke-linejoin="round"/>
<polygon points="1268.4,514.2 1292.1,506.3 1302.6,511.6 1323.7,522.1 1344.7,522.1 1360.5,532.6 1376.3,556.3 1384.2,574.7 1400.0,580.0 1413.2,590.5 1410.5,611.6 1392.1,616.8 1402.6,632.6 1402.6,640.5 1394.7,645.8 1400.0,664.2 1392.1,677.4 1373.7,680.0 1355.3,690.5 1357.9,714.2 1334.2,732.6 1307.9,724.7 1294.7,708.9 1257.9,701.0 1234.2,703.7 1231.6,704.0 1194.0,693.0 1189.5,685.3 1184.2,669.5 1189.5,648.4 1202.6,630.0 1213.2,611.6 1218.4,590.5 1239.5,572.1 1242.1,553.7 1255.3,537.9 1271.0,530.0" fill="#bf2d27" stroke="#bf2d27" stroke-width="3" stroke-linejoin="round"/>
<polygon points="1231.6,704.0 1257.9,701.0 1294.7,708.9 1307.9,724.7 1334.2,732.6 1357.9,714.2 1338.0,736.2 1330.6,751.0 1345.4,784.5 1312.0,799.4 1285.9,832.9 1274.8,862.6 1300.8,885.0 1304.5,911.0 1285.9,933.3 1263.6,937.0 1259.9,922.1 1233.9,899.8 1226.4,877.5 1180.0,847.8 1183.0,844.2 1201.6,829.3 1209.1,803.0 1216.6,784.4 1227.8,776.9 1220.3,754.5 1224.0,732.0" fill="#8f171c" stroke="#8f171c" stroke-width="3" stroke-linejoin="round"/>
<polygon points="1330.6,751.0 1338.0,736.2 1345.4,710.2 1357.9,714.2 1355.3,690.5 1373.7,680.0 1392.1,677.4 1400.0,664.2 1413.2,680.0 1434.2,677.4 1444.7,685.3 1460.5,685.3 1478.9,690.5 1492.1,706.3 1512.8,702.7 1518.4,703.7 1524.0,743.6 1509.0,758.5 1484.4,784.4 1468.2,803.1 1464.5,810.6 1408.7,825.4 1390.0,818.0 1378.9,788.3 1345.4,784.5" fill="#d8806a" stroke="#d8806a" stroke-width="3" stroke-linejoin="round"/>
<polygon points="1345.4,784.5 1378.9,788.3 1390.0,818.0 1408.7,825.4 1464.5,810.6 1462.6,818.0 1464.5,847.8 1468.2,877.5 1475.6,903.5 1483.0,929.6 1471.9,933.3 1457.0,937.0 1442.1,951.9 1416.1,940.7 1367.8,951.9 1360.3,970.5 1338.0,966.8 1334.3,951.9 1300.0,945.0 1285.9,933.3 1304.5,911.0 1300.8,885.0 1274.8,862.6 1285.9,832.9 1312.0,799.4" fill="#bf2d27" stroke="#bf2d27" stroke-width="3" stroke-linejoin="round"/>
<polygon points="1542.5,739.9 1553.7,765.9 1583.4,780.8 1576.0,803.1 1594.6,814.3 1635.5,818.0 1657.8,803.1 1676.4,818.0 1650.4,847.8 1620.6,885.0 1598.3,922.1 1602.0,944.4 1605.8,974.2 1616.9,992.8 1594.6,985.4 1564.9,974.2 1546.3,963.0 1520.2,948.2 1501.6,937.0 1483.0,929.6 1475.6,903.5 1468.2,877.5 1464.5,847.8 1462.6,818.0 1464.5,810.6 1468.2,803.1 1509.0,758.5 1524.0,743.6" fill="#d5614a" stroke="#d5614a" stroke-width="3" stroke-linejoin="round"/>
<polygon points="1642.4,524.9 1646.2,526.4 1675.2,544.7 1688.9,559.9 1685.8,582.8 1682.8,598.0 1683.8,609.8 1691.3,654.4 1713.6,699.0 1732.2,732.5 1717.3,739.9 1724.8,754.8 1728.5,788.3 1721.0,803.1 1676.4,818.0 1657.8,803.1 1635.5,818.0 1594.6,814.3 1576.0,803.1 1583.4,780.8 1553.7,765.9 1542.5,739.9 1524.0,743.6 1518.4,703.7 1518.4,680.0 1518.4,658.9 1523.7,643.2 1518.4,632.6 1505.3,618.2 1521.0,614.2 1524.4,605.6 1530.5,593.4 1527.4,582.8 1530.5,566.0 1568.5,561.5 1597.5,560.0 1621.9,552.3 1634.0,537.1" fill="#d8806a" stroke="#d8806a" stroke-width="3" stroke-linejoin="round"/>
<polygon points="829.5,275.6 865.1,263.6 917.4,241.9 969.8,223.2 1003.4,210.2 1025.9,197.1 1037.1,181.4 1057.7,175.4 1067.0,189.6 1070.8,219.5 1061.4,230.7 1067.0,256.9 1076.4,279.3 1080.1,298.0 1072.6,320.5 1033.4,344.8 1044.6,357.9 1053.9,369.1 1044.6,384.1 1025.9,399.0 1007.2,410.2 992.2,414.0 988.5,399.0 977.3,402.8 932.4,417.7 924.9,428.9 887.5,436.4 883.8,451.4 865.1,470.1 838.9,447.6 822.1,442.0 823.9,421.5 842.6,414.0 848.2,376.6 846.4,339.2 837.0,301.8" fill="none" stroke="#ffffff" stroke-opacity="0.22" stroke-width="1"/>
<polygon points="1057.7,175.4 1082.0,167.2 1100.7,154.1 1119.4,146.6 1156.8,136.5 1186.7,133.5 1209.1,133.5 1212.9,148.5 1220.3,174.6 1227.8,197.1 1242.8,206.4 1274.9,210.2 1275.0,209.0 1297.4,204.5 1323.6,194.1 1290.0,221.4 1286.2,245.7 1310.5,273.7 1304.9,294.3 1278.7,324.2 1272.7,328.0 1246.5,324.2 1239.0,316.7 1212.9,309.3 1194.2,303.6 1179.2,298.0 1164.2,301.8 1153.0,309.3 1134.3,328.0 1119.4,324.2 1113.8,339.2 1082.0,335.4 1072.6,320.5 1080.1,298.0 1076.4,279.3 1067.0,256.9 1061.4,230.7 1070.8,219.5 1067.0,189.6" fill="none" stroke="#ffffff" stroke-opacity="0.22" stroke-width="1"/>
<polygon points="1323.6,194.1 1387.2,200.8 1462.0,211.3 1536.8,210.2 1613.4,202.7 1604.1,215.8 1585.4,227.0 1596.6,249.4 1604.1,279.3 1596.6,301.8 1566.7,316.7 1536.8,339.2 1503.1,344.8 1484.4,354.1 1454.5,365.4 1439.0,364.8 1421.0,370.2 1397.6,379.2 1387.7,393.6 1365.2,392.7 1350.8,393.6 1345.4,385.5 1340.0,390.0 1331.0,394.0 1329.2,382.8 1326.5,368.4 1311.2,364.8 1287.8,354.0 1284.2,340.5 1278.7,324.2 1304.9,294.3 1310.5,273.7 1286.2,245.7 1290.0,221.4" fill="none" stroke="#ffffff" stroke-opacity="0.22" stroke-width="1"/>
<polygon points="1613.4,202.7 1634.0,212.0 1663.9,230.7 1675.1,249.4 1677.0,264.4 1678.9,301.8 1690.1,339.2 1701.3,376.6 1710.7,395.3 1713.3,418.3 1711.7,430.5 1714.8,457.9 1696.5,474.6 1682.8,479.2 1664.5,491.4 1652.3,506.6 1646.2,521.9 1642.4,524.9 1632.5,518.8 1618.8,512.7 1591.4,508.1 1585.3,494.4 1576.2,471.6 1576.2,448.7 1564.0,441.1 1560.9,436.6 1539.6,435.0 1536.6,422.8 1530.5,407.6 1522.8,400.0 1510.6,369.1 1503.1,344.8 1536.8,339.2 1566.7,316.7 1596.6,301.8 1604.1,279.3 1596.6,249.4 1585.4,227.0 1604.1,215.8" fill="none" stroke="#ffffff" stroke-opacity="0.22" stroke-width="1"/>
<polygon points="1503.1,344.8 1510.6,369.1 1522.8,400.0 1530.5,407.6 1536.6,422.8 1539.6,435.0 1560.9,436.6 1564.0,441.1 1576.2,448.7 1576.2,471.6 1585.3,494.4 1591.4,508.1 1618.8,512.7 1632.5,518.8 1642.4,524.9 1634.0,537.1 1621.9,552.3 1597.5,560.0 1568.5,561.5 1530.5,566.0 1527.4,582.8 1530.5,593.4 1524.4,605.6 1521.0,614.2 1505.3,618.2 1518.4,632.6 1523.7,643.2 1518.4,658.9 1518.4,680.0 1518.4,703.7 1492.1,706.3 1478.9,690.5 1460.5,685.3 1444.7,685.3 1434.2,677.4 1413.2,680.0 1400.0,664.2 1394.7,645.8 1402.6,640.5 1402.6,632.6 1392.1,616.8 1410.5,611.6 1413.2,590.5 1400.0,580.0 1384.2,574.7 1376.3,556.3 1360.5,532.6 1344.7,522.1 1323.7,522.1 1302.6,511.6 1292.1,506.3 1297.4,485.3 1305.3,466.8 1302.6,443.2 1307.9,427.4 1323.7,414.2 1326.3,401.0 1331.0,394.0 1340.0,390.0 1345.4,385.5 1350.8,393.6 1365.2,392.7 1387.7,393.6 1397.6,379.2 1421.0,370.2 1439.0,364.8 1454.5,365.4 1484.4,354.1" fill="none" stroke="#ffffff" stroke-opacity="0.22" stroke-width="1"/>
<polygon points="1119.4,324.2 1134.3,328.0 1153.0,309.3 1164.2,301.8 1179.2,298.0 1194.2,303.6 1212.9,309.3 1239.0,316.7 1246.5,324.2 1272.7,328.0 1278.7,324.2 1284.2,340.5 1287.8,354.0 1311.2,364.8 1326.5,368.4 1329.2,382.8 1331.0,394.0 1326.3,401.0 1323.7,414.2 1307.9,427.4 1302.6,443.2 1305.3,466.8 1297.4,485.3 1292.1,506.3 1268.4,514.2 1250.0,514.2 1236.8,503.7 1215.8,495.8 1207.9,490.5 1184.2,487.9 1165.8,477.4 1150.0,472.1 1141.8,470.0 1123.0,451.4 1126.9,432.7 1111.9,414.0 1111.9,395.3 1119.4,376.6 1108.2,357.9 1113.8,339.2" fill="none" stroke="#ffffff" stroke-opacity="0.22" stroke-width="1"/>
<polygon points="1072.6,320.5 1082.0,335.4 1113.8,339.2 1108.1,357.9 1119.4,376.6 1111.9,395.3 1111.9,414.0 1126.8,432.7 1123.1,451.4 1141.8,470.1 1150.0,472.1 1165.8,477.4 1184.2,487.9 1207.9,490.5 1215.8,495.8 1236.8,503.7 1250.0,514.2 1268.4,514.2 1271.0,530.0 1255.3,537.9 1242.1,553.7 1239.5,572.1 1218.4,590.5 1213.2,611.6 1202.6,630.0 1189.5,648.4 1184.2,669.5 1189.5,685.3 1194.0,693.0 1179.0,689.0 1156.8,687.1 1149.0,653.5 1134.3,646.0 1130.6,627.3 1111.9,619.8 1100.7,627.3 1074.5,627.3 1059.5,612.4 1033.4,601.1 1025.9,597.4 1018.4,582.4 1003.4,575.0 992.2,560.0 981.0,544.9 981.0,518.7 973.5,470.0 986.6,451.4 992.2,414.0 1007.2,410.2 1025.9,399.0 1044.6,384.1 1053.9,369.1 1044.6,357.9 1033.4,344.8" fill="none" stroke="#ffffff" stroke-opacity="0.22" stroke-width="1"/>
<polygon points="865.1,470.1 883.8,451.4 887.5,436.4 924.9,428.9 932.4,417.7 977.3,402.8 988.5,399.0 992.2,414.0 986.6,451.4 973.5,470.1 981.0,518.7 981.0,544.9 992.2,560.0 1003.4,575.0 1018.4,582.4 1025.9,597.4 1018.4,608.6 1003.4,608.6 984.7,601.1 969.8,623.6 951.1,634.8 932.4,638.5 917.4,649.8 900.6,653.5 876.3,627.3 865.1,589.9 872.5,560.0 872.5,537.4 861.3,507.5 872.5,488.8" fill="none" stroke="#ffffff" stroke-opacity="0.22" stroke-width="1"/>
<polygon points="900.6,653.5 917.4,649.8 932.4,638.5 951.1,634.8 969.8,623.6 984.7,601.1 1003.4,608.6 1018.4,608.6 1025.9,597.4 1033.4,601.1 1059.5,612.4 1074.5,627.3 1100.7,627.3 1111.9,619.8 1130.6,627.3 1134.3,646.0 1149.3,653.5 1156.8,687.2 1134.3,690.9 1111.9,724.5 1100.7,761.9 1085.7,788.1 1072.6,791.9 1078.2,803.1 1082.0,821.8 1074.5,818.0 1059.5,840.5 1052.1,836.7 1037.1,814.3 1010.9,791.9 1029.6,776.9 1025.9,765.7 992.2,765.7 969.8,750.7 936.1,743.2 924.9,728.3 917.4,713.3 902.5,709.6 902.5,730.2 883.8,732.0 895.0,717.1 902.5,679.7" fill="none" stroke="#ffffff" stroke-opacity="0.22" stroke-width="1"/>
<polygon points="1156.8,687.2 1179.2,689.0 1194.2,692.8 1220.3,698.4 1231.6,704.0 1224.1,732.0 1220.3,754.5 1227.8,776.9 1216.6,784.4 1209.1,803.1 1201.6,829.3 1182.9,844.2 1168.0,859.2 1145.5,836.7 1149.3,818.0 1119.4,818.0 1100.7,803.1 1089.5,795.6 1085.7,788.1 1100.7,761.9 1111.9,724.5 1134.3,690.9" fill="none" stroke="#ffffff" stroke-opacity="0.22" stroke-width="1"/>
<polygon points="1268.4,514.2 1292.1,506.3 1302.6,511.6 1323.7,522.1 1344.7,522.1 1360.5,532.6 1376.3,556.3 1384.2,574.7 1400.0,580.0 1413.2,590.5 1410.5,611.6 1392.1,616.8 1402.6,632.6 1402.6,640.5 1394.7,645.8 1400.0,664.2 1392.1,677.4 1373.7,680.0 1355.3,690.5 1357.9,714.2 1334.2,732.6 1307.9,724.7 1294.7,708.9 1257.9,701.0 1234.2,703.7 1231.6,704.0 1194.0,693.0 1189.5,685.3 1184.2,669.5 1189.5,648.4 1202.6,630.0 1213.2,611.6 1218.4,590.5 1239.5,572.1 1242.1,553.7 1255.3,537.9 1271.0,530.0" fill="none" stroke="#ffffff" stroke-opacity="0.22" stroke-width="1"/>
<polygon points="1231.6,704.0 1257.9,701.0 1294.7,708.9 1307.9,724.7 1334.2,732.6 1357.9,714.2 1338.0,736.2 1330.6,751.0 1345.4,784.5 1312.0,799.4 1285.9,832.9 1274.8,862.6 1300.8,885.0 1304.5,911.0 1285.9,933.3 1263.6,937.0 1259.9,922.1 1233.9,899.8 1226.4,877.5 1180.0,847.8 1183.0,844.2 1201.6,829.3 1209.1,803.0 1216.6,784.4 1227.8,776.9 1220.3,754.5 1224.0,732.0" fill="none" stroke="#ffffff" stroke-opacity="0.22" stroke-width="1"/>
<polygon points="1330.6,751.0 1338.0,736.2 1345.4,710.2 1357.9,714.2 1355.3,690.5 1373.7,680.0 1392.1,677.4 1400.0,664.2 1413.2,680.0 1434.2,677.4 1444.7,685.3 1460.5,685.3 1478.9,690.5 1492.1,706.3 1512.8,702.7 1518.4,703.7 1524.0,743.6 1509.0,758.5 1484.4,784.4 1468.2,803.1 1464.5,810.6 1408.7,825.4 1390.0,818.0 1378.9,788.3 1345.4,784.5" fill="none" stroke="#ffffff" stroke-opacity="0.22" stroke-width="1"/>
<polygon points="1345.4,784.5 1378.9,788.3 1390.0,818.0 1408.7,825.4 1464.5,810.6 1462.6,818.0 1464.5,847.8 1468.2,877.5 1475.6,903.5 1483.0,929.6 1471.9,933.3 1457.0,937.0 1442.1,951.9 1416.1,940.7 1367.8,951.9 1360.3,970.5 1338.0,966.8 1334.3,951.9 1300.0,945.0 1285.9,933.3 1304.5,911.0 1300.8,885.0 1274.8,862.6 1285.9,832.9 1312.0,799.4" fill="none" stroke="#ffffff" stroke-opacity="0.22" stroke-width="1"/>
<polygon points="1542.5,739.9 1553.7,765.9 1583.4,780.8 1576.0,803.1 1594.6,814.3 1635.5,818.0 1657.8,803.1 1676.4,818.0 1650.4,847.8 1620.6,885.0 1598.3,922.1 1602.0,944.4 1605.8,974.2 1616.9,992.8 1594.6,985.4 1564.9,974.2 1546.3,963.0 1520.2,948.2 1501.6,937.0 1483.0,929.6 1475.6,903.5 1468.2,877.5 1464.5,847.8 1462.6,818.0 1464.5,810.6 1468.2,803.1 1509.0,758.5 1524.0,743.6" fill="none" stroke="#ffffff" stroke-opacity="0.22" stroke-width="1"/>
<polygon points="1642.4,524.9 1646.2,526.4 1675.2,544.7 1688.9,559.9 1685.8,582.8 1682.8,598.0 1683.8,609.8 1691.3,654.4 1713.6,699.0 1732.2,732.5 1717.3,739.9 1724.8,754.8 1728.5,788.3 1721.0,803.1 1676.4,818.0 1657.8,803.1 1635.5,818.0 1594.6,814.3 1576.0,803.1 1583.4,780.8 1553.7,765.9 1542.5,739.9 1524.0,743.6 1518.4,703.7 1518.4,680.0 1518.4,658.9 1523.7,643.2 1518.4,632.6 1505.3,618.2 1521.0,614.2 1524.4,605.6 1530.5,593.4 1527.4,582.8 1530.5,566.0 1568.5,561.5 1597.5,560.0 1621.9,552.3 1634.0,537.1" fill="none" stroke="#ffffff" stroke-opacity="0.22" stroke-width="1"/>
<path d="M1210.5,139.3 Q1232,150 1248,169.8" fill="none" stroke="#d5614a" stroke-width="2.4" stroke-linecap="round"/>
<circle cx="756" cy="489" r="9.5" fill="#a01c1c" fill-opacity="0.9" stroke="#d89090" stroke-opacity="0.85" stroke-width="1.3"/>
<circle cx="737" cy="697" r="10.5" fill="#a01c1c" fill-opacity="0.9" stroke="#d89090" stroke-opacity="0.85" stroke-width="1.3"/>
<circle cx="1460" cy="149" r="6.0" fill="#a01c1c" fill-opacity="0.9" stroke="#d89090" stroke-opacity="0.85" stroke-width="1.3"/>
<circle cx="1722" cy="878" r="10.5" fill="#a01c1c" fill-opacity="0.9" stroke="#d89090" stroke-opacity="0.85" stroke-width="1.3"/>
<circle cx="1785" cy="1005" r="7.5" fill="#a01c1c" fill-opacity="0.9" stroke="#d89090" stroke-opacity="0.85" stroke-width="1.3"/>
<circle cx="1563" cy="1047" r="7.5" fill="#a01c1c" fill-opacity="0.9" stroke="#d89090" stroke-opacity="0.85" stroke-width="1.3"/>
<circle cx="1841" cy="748" r="7.5" fill="#a01c1c" fill-opacity="0.9" stroke="#d89090" stroke-opacity="0.85" stroke-width="1.3"/>
<text x="949" y="332" font-size="16" font-weight="bold" fill="#ffffff" text-anchor="middle" stroke="#000" stroke-width="2.5" paint-order="stroke" stroke-linejoin="round" textLength="44" lengthAdjust="spacingAndGlyphs">17643</text>
<text x="1174" y="244" font-size="16" font-weight="bold" fill="#ffffff" text-anchor="middle" stroke="#000" stroke-width="2.5" paint-order="stroke" stroke-linejoin="round" textLength="44" lengthAdjust="spacingAndGlyphs">31799</text>
<text x="1460" y="290" font-size="16" font-weight="bold" fill="#ffffff" text-anchor="middle" stroke="#000" stroke-width="2.5" paint-order="stroke" stroke-linejoin="round" textLength="44" lengthAdjust="spacingAndGlyphs">14613</text>
<text x="1604" y="380" font-size="16" font-weight="bold" fill="#ffffff" text-anchor="middle" stroke="#000" stroke-width="2.5" paint-order="stroke" stroke-linejoin="round" textLength="44" lengthAdjust="spacingAndGlyphs">14500</text>
<text x="1218" y="410" font-size="16" font-weight="bold" fill="#ffffff" text-anchor="middle" stroke="#000" stroke-width="2.5" paint-order="stroke" stroke-linejoin="round" textLength="44" lengthAdjust="spacingAndGlyphs">34688</text>
<text x="1111" y="521" font-size="16" font-weight="bold" fill="#ffffff" text-anchor="middle" stroke="#000" stroke-width="2.5" paint-order="stroke" stroke-linejoin="round" textLength="44" lengthAdjust="spacingAndGlyphs">55975</text>
<text x="1461" y="518" font-size="16" font-weight="bold" fill="#ffffff" text-anchor="middle" stroke="#000" stroke-width="2.5" paint-order="stroke" stroke-linejoin="round" textLength="44" lengthAdjust="spacingAndGlyphs">74892</text>
<text x="926" y="541" font-size="16" font-weight="bold" fill="#ffffff" text-anchor="middle" stroke="#000" stroke-width="2.5" paint-order="stroke" stroke-linejoin="round" textLength="44" lengthAdjust="spacingAndGlyphs">10923</text>
<text x="1300" y="629" font-size="16" font-weight="bold" fill="#ffffff" text-anchor="middle" stroke="#000" stroke-width="2.5" paint-order="stroke" stroke-linejoin="round" textLength="44" lengthAdjust="spacingAndGlyphs">40911</text>
<text x="1016" y="704" font-size="16" font-weight="bold" fill="#ffffff" text-anchor="middle" stroke="#000" stroke-width="2.5" paint-order="stroke" stroke-linejoin="round" textLength="44" lengthAdjust="spacingAndGlyphs">35025</text>
<text x="1608" y="684" font-size="16" font-weight="bold" fill="#ffffff" text-anchor="middle" stroke="#000" stroke-width="2.5" paint-order="stroke" stroke-linejoin="round" textLength="44" lengthAdjust="spacingAndGlyphs">30117</text>
<text x="1162" y="768" font-size="16" font-weight="bold" fill="#ffffff" text-anchor="middle" stroke="#000" stroke-width="2.5" paint-order="stroke" stroke-linejoin="round" textLength="44" lengthAdjust="spacingAndGlyphs">15832</text>
<text x="1429" y="751" font-size="16" font-weight="bold" fill="#ffffff" text-anchor="middle" stroke="#000" stroke-width="2.5" paint-order="stroke" stroke-linejoin="round" textLength="44" lengthAdjust="spacingAndGlyphs">17092</text>
<text x="1258" y="813" font-size="16" font-weight="bold" fill="#ffffff" text-anchor="middle" stroke="#000" stroke-width="2.5" paint-order="stroke" stroke-linejoin="round" textLength="44" lengthAdjust="spacingAndGlyphs">75881</text>
<text x="1379" y="880" font-size="16" font-weight="bold" fill="#ffffff" text-anchor="middle" stroke="#000" stroke-width="2.5" paint-order="stroke" stroke-linejoin="round" textLength="44" lengthAdjust="spacingAndGlyphs">63878</text>
<text x="1551" y="866" font-size="16" font-weight="bold" fill="#ffffff" text-anchor="middle" stroke="#000" stroke-width="2.5" paint-order="stroke" stroke-linejoin="round" textLength="44" lengthAdjust="spacingAndGlyphs">34369</text>
<rect x="1802" y="48" width="31" height="32" fill="#343434"/>
<rect x="1811" y="55.4" width="3" height="3" fill="#e0e0e0"/>
<rect x="1816" y="56.199999999999996" width="9.5" height="1.5" fill="#e0e0e0"/>
<rect x="1811" y="59.4" width="3" height="3" fill="#e0e0e0"/>
<rect x="1816" y="60.199999999999996" width="9.5" height="1.5" fill="#e0e0e0"/>
<rect x="1811" y="63.4" width="3" height="3" fill="#e0e0e0"/>
<rect x="1816" y="64.2" width="9.5" height="1.5" fill="#e0e0e0"/>
<rect x="1811" y="67.4" width="3" height="3" fill="#e0e0e0"/>
<rect x="1816" y="68.2" width="9.5" height="1.5" fill="#e0e0e0"/>
<rect x="1805" y="1035" width="30" height="56" fill="#333333"/>
<path d="M1813,1049.5 H1826 M1819.5,1043 V1056" stroke="#dddddd" stroke-width="1.6"/>
<path d="M1813,1076.5 H1826" stroke="#dddddd" stroke-width="1.6"/>
<rect x="1355" y="1097" width="477" height="15" fill="#cccccc" fill-opacity="0.92"/>
<text x="1359.0" y="1109.0" font-size="12.00" fill="#333333" text-anchor="start" textLength="469.0" lengthAdjust="spacingAndGlyphs">Esri, HERE, Garmin, FAO, NOAA, USGS | Esri, HERE, Garmin, FAO, NOAA, USGS</text>
</svg>
<rect x="708.5" y="40.5" width="1134" height="1077" fill="none" stroke="#3a3a3a" stroke-width="1"/>
<circle cx="1841.8" cy="44.1" r="8.4" fill="#2e2e2e" stroke="#bdbdbd" stroke-width="1.1"/>
<path d="M1838,40.5 L1840.5,43 M1838,40.5 L1838,42.5 M1838,40.5 L1840,40.5 M1845.6,40.5 L1843.1,43 M1845.6,40.5 L1845.6,42.5 M1845.6,40.5 L1843.6,40.5 M1838,47.7 L1840.5,45.2 M1838,47.7 L1838,45.7 M1838,47.7 L1840,47.7 M1845.6,47.7 L1843.1,45.2 M1845.6,47.7 L1845.6,45.7 M1845.6,47.7 L1843.6,47.7" stroke="#cfcfcf" stroke-width="0.9" fill="none"/>
<rect x="721.5" y="1118" width="159" height="27" fill="#222222" stroke="#3a3a3a" stroke-width="1"/>
<rect x="721" y="1142" width="160" height="3" fill="#3a78c9"/>
<text x="800.5" y="1135.0" font-size="12.80" fill="#d8d8d8" text-anchor="middle">Przypadki potwierdzone</text>
<rect x="885.5" y="1118" width="151" height="27" fill="#000000" stroke="#3a3a3a" stroke-width="1"/>
<text x="960.5" y="1135.0" font-size="12.80" fill="#d8d8d8" text-anchor="middle">Dzienne potwierdzone</text>
<rect x="1042.5" y="1118" width="284" height="27" fill="#000000" stroke="#3a3a3a" stroke-width="1"/>
<text x="1184.0" y="1135.0" font-size="12.80" fill="#d8d8d8" text-anchor="middle">Przypadki potwierdzone na 100k mieszkańców</text>
<rect x="1331.5" y="1118" width="273" height="27" fill="#000000" stroke="#3a3a3a" stroke-width="1"/>
<text x="1467.5" y="1135.0" font-size="12.80" fill="#d8d8d8" text-anchor="middle">Obszary z nowymi zasadami bezpieczeństwa</text>
<rect x="708.5" y="1156.5" width="1134" height="279" fill="#222222" stroke="#383838" stroke-width="1"/>
<text x="714" y="1177" font-size="14.2" fill="#dcdcdc" stroke="#dcdcdc" stroke-width="0.35" text-decoration="underline">Źródła danych</text>
<text x="714" y="1210.7" font-size="14.2" fill="#d4d4d4">Liczba zachorowań i zgonów dla Polski: <tspan fill="#3b8be0" font-style="italic">Ministerstwo Zdrowia</tspan></text>
<text x="714" y="1227.8" font-size="14.2" fill="#d4d4d4">Dane o zachorowaniach: <tspan font-style="italic">na podst.:</tspan> <tspan fill="#3b8be0" font-style="italic">Johns Hopkins CSSE</tspan></text>
<text x="714" y="1244.7" font-size="14.2" fill="#d4d4d4">Dane o populacji: <tspan fill="#3b8be0" font-style="italic">GUS</tspan></text>
<rect x="714" y="1266" width="126" height="17" fill="#dddddd"/>
<text x="715.0" y="1279.5" font-size="13.50" fill="#3b8be0" text-anchor="start" font-weight="bold" textLength="124.0" lengthAdjust="spacingAndGlyphs">WERSJA MOBILNA</text>
<text x="1728.0" y="1179.0" font-size="14.20" fill="#dcdcdc" text-anchor="middle">Aktualizacja</text>
<text x="1731.0" y="1208.0" font-size="14.20" fill="#dcdcdc" text-anchor="middle">11/9/2020, 10:26 AM</text>
<rect x="1853.5" y="40.5" width="332" height="373" fill="#222222" stroke="#383838" stroke-width="1"/>
<rect x="1853.5" y="424.5" width="332" height="344" fill="#222222" stroke="#383838" stroke-width="1"/>
<rect x="1853.5" y="779.5" width="332" height="366" fill="#222222" stroke="#383838" stroke-width="1"/>
<rect x="1853.5" y="1156.5" width="332" height="279" fill="#222222" stroke="#383838" stroke-width="1"/>
<text x="2019.0" y="62.3" font-size="14.00" fill="#dcdcdc" text-anchor="middle">Wszystkie potwierdzone</text>
<text x="1876.6" y="263.4" font-size="55.03" fill="#ff0000" text-anchor="start" font-weight="bold" textLength="285.4" lengthAdjust="spacingAndGlyphs">50 493 472</text>
<text x="2019.0" y="445.0" font-size="14.00" fill="#dcdcdc" text-anchor="middle">Wszystkie aktywne</text>
<text x="1878.8" y="631.9" font-size="54.19" fill="#f3a00f" text-anchor="start" font-weight="bold" textLength="281.2" lengthAdjust="spacingAndGlyphs">16 122 627</text>
<text x="2019.0" y="801.0" font-size="14.00" fill="#dcdcdc" text-anchor="middle">Wszystkie wyleczone</text>
<text x="1876.2" y="998.8" font-size="55.87" fill="#8fd619" text-anchor="start" font-weight="bold" textLength="285.7" lengthAdjust="spacingAndGlyphs">33 081 594</text>
<text x="2019.0" y="1178.0" font-size="14.00" fill="#dcdcdc" text-anchor="middle">Wszystkie śmiertelne</text>
<text x="1878.8" y="1333.1" font-size="61.03" fill="#e0e0e0" text-anchor="start" font-weight="bold" textLength="281.2" lengthAdjust="spacingAndGlyphs">1 257 747</text>
<rect x="2196.5" y="40.5" width="353" height="1395" fill="#222222" stroke="#383838" stroke-width="1"/>
<text x="2202.8" y="62.3" font-size="14.10" fill="#dcdcdc" text-anchor="start">Przypadki wg kraju (wg WHO)</text>
<svg x="2197" y="72" width="336" height="1364" viewBox="2197 72 336 1364" overflow="hidden">
<text x="2207.5" y="91.4" font-size="15.00" fill="#ee1111" text-anchor="start" font-weight="bold" textLength="65.6" lengthAdjust="spacingAndGlyphs">9 972 333</text>
<text x="2280.1" y="91.4" font-size="15.00" fill="#e0e0e0" text-anchor="start" stroke="#e0e0e0" stroke-width="0.4">US</text>
<rect x="2197" y="100" width="336" height="1" fill="#505050"/>
<text x="2207.5" y="119.4" font-size="15.00" fill="#ee1111" text-anchor="start" font-weight="bold" textLength="65.6" lengthAdjust="spacingAndGlyphs">8 553 657</text>
<text x="2280.1" y="119.4" font-size="15.00" fill="#e0e0e0" text-anchor="start" stroke="#e0e0e0" stroke-width="0.4">India</text>
<rect x="2197" y="128" width="336" height="1" fill="#505050"/>
<text x="2207.5" y="147.4" font-size="15.00" fill="#ee1111" text-anchor="start" font-weight="bold" textLength="65.6" lengthAdjust="spacingAndGlyphs">5 664 115</text>
<text x="2280.1" y="147.4" font-size="15.00" fill="#e0e0e0" text-anchor="start" stroke="#e0e0e0" stroke-width="0.4">Brazil</text>
<rect x="2197" y="156" width="336" height="1" fill="#505050"/>
<text x="2207.5" y="175.4" font-size="15.00" fill="#ee1111" text-anchor="start" font-weight="bold" textLength="65.6" lengthAdjust="spacingAndGlyphs">1 835 187</text>
<text x="2280.1" y="175.4" font-size="15.00" fill="#e0e0e0" text-anchor="start" stroke="#e0e0e0" stroke-width="0.4">France</text>
<rect x="2197" y="184" width="336" height="1" fill="#505050"/>
<text x="2207.5" y="203.4" font-size="15.00" fill="#ee1111" text-anchor="start" font-weight="bold" textLength="65.6" lengthAdjust="spacingAndGlyphs">1 781 997</text>
<text x="2280.1" y="203.4" font-size="15.00" fill="#e0e0e0" text-anchor="start" stroke="#e0e0e0" stroke-width="0.4">Russia</text>
<rect x="2197" y="212" width="336" height="1" fill="#505050"/>
<text x="2207.5" y="231.4" font-size="15.00" fill="#ee1111" text-anchor="start" font-weight="bold" textLength="65.6" lengthAdjust="spacingAndGlyphs">1 328 832</text>
<text x="2280.1" y="231.4" font-size="15.00" fill="#e0e0e0" text-anchor="start" stroke="#e0e0e0" stroke-width="0.4">Spain</text>
<rect x="2197" y="240" width="336" height="1" fill="#505050"/>
<text x="2207.5" y="259.4" font-size="15.00" fill="#ee1111" text-anchor="start" font-weight="bold" textLength="65.6" lengthAdjust="spacingAndGlyphs">1 242 182</text>
<text x="2280.1" y="259.4" font-size="15.00" fill="#e0e0e0" text-anchor="start" stroke="#e0e0e0" stroke-width="0.4">Argentina</text>
<rect x="2197" y="268" width="336" height="1" fill="#505050"/>
<text x="2207.5" y="287.4" font-size="15.00" fill="#ee1111" text-anchor="start" font-weight="bold" textLength="65.6" lengthAdjust="spacingAndGlyphs">1 195 350</text>
<text x="2280.1" y="287.4" font-size="15.00" fill="#e0e0e0" text-anchor="start" stroke="#e0e0e0" stroke-width="0.4">United Kingdom</text>
<rect x="2197" y="296" width="336" height="1" fill="#505050"/>
<text x="2207.5" y="315.4" font-size="15.00" fill="#ee1111" text-anchor="start" font-weight="bold" textLength="65.6" lengthAdjust="spacingAndGlyphs">1 143 887</text>
<text x="2280.1" y="315.4" font-size="15.00" fill="#e0e0e0" text-anchor="start" stroke="#e0e0e0" stroke-width="0.4">Colombia</text>
<rect x="2197" y="324" width="336" height="1" fill="#505050"/>
<text x="2207.5" y="343.4" font-size="15.00" fill="#ee1111" text-anchor="start" font-weight="bold" textLength="52.5" lengthAdjust="spacingAndGlyphs">967 825</text>
<text x="2267.0" y="343.4" font-size="15.00" fill="#e0e0e0" text-anchor="start" stroke="#e0e0e0" stroke-width="0.4">Mexico</text>
<rect x="2197" y="352" width="336" height="1" fill="#505050"/>
<text x="2207.5" y="371.4" font-size="15.00" fill="#ee1111" text-anchor="start" font-weight="bold" textLength="52.5" lengthAdjust="spacingAndGlyphs">935 104</text>
<text x="2267.0" y="371.4" font-size="15.00" fill="#e0e0e0" text-anchor="start" stroke="#e0e0e0" stroke-width="0.4">Italy</text>
<rect x="2197" y="380" width="336" height="1" fill="#505050"/>
<text x="2207.5" y="399.4" font-size="15.00" fill="#ee1111" text-anchor="start" font-weight="bold" textLength="52.5" lengthAdjust="spacingAndGlyphs">922 333</text>
<text x="2267.0" y="399.4" font-size="15.00" fill="#e0e0e0" text-anchor="start" stroke="#e0e0e0" stroke-width="0.4">Peru</text>
<rect x="2197" y="408" width="336" height="1" fill="#505050"/>
<text x="2207.5" y="427.4" font-size="15.00" fill="#ee1111" text-anchor="start" font-weight="bold" textLength="52.5" lengthAdjust="spacingAndGlyphs">737 278</text>
<text x="2267.0" y="427.4" font-size="15.00" fill="#e0e0e0" text-anchor="start" stroke="#e0e0e0" stroke-width="0.4">South Africa</text>
<rect x="2197" y="436" width="336" height="1" fill="#505050"/>
<text x="2207.5" y="455.4" font-size="15.00" fill="#ee1111" text-anchor="start" font-weight="bold" textLength="52.5" lengthAdjust="spacingAndGlyphs">692 949</text>
<text x="2267.0" y="455.4" font-size="15.00" fill="#e0e0e0" text-anchor="start" stroke="#e0e0e0" stroke-width="0.4">Iran</text>
<rect x="2197" y="464" width="336" height="1" fill="#505050"/>
<text x="2207.5" y="483.4" font-size="15.00" fill="#ee1111" text-anchor="start" font-weight="bold" textLength="52.5" lengthAdjust="spacingAndGlyphs">682 624</text>
<text x="2267.0" y="483.4" font-size="15.00" fill="#e0e0e0" text-anchor="start" stroke="#e0e0e0" stroke-width="0.4">Germany</text>
<rect x="2197" y="492" width="336" height="1" fill="#505050"/>
<text x="2207.5" y="511.4" font-size="15.00" fill="#ee1111" text-anchor="start" font-weight="bold" textLength="52.5" lengthAdjust="spacingAndGlyphs">568 138</text>
<text x="2267.0" y="511.4" font-size="15.00" fill="#e0e0e0" text-anchor="start" stroke="#e0e0e0" stroke-width="0.4">Poland</text>
<rect x="2197" y="520" width="336" height="1" fill="#505050"/>
<text x="2207.5" y="539.4" font-size="15.00" fill="#ee1111" text-anchor="start" font-weight="bold" textLength="52.5" lengthAdjust="spacingAndGlyphs">521 558</text>
<text x="2267.0" y="539.4" font-size="15.00" fill="#e0e0e0" text-anchor="start" stroke="#e0e0e0" stroke-width="0.4">Chile</text>
<rect x="2197" y="548" width="336" height="1" fill="#505050"/>
<text x="2207.5" y="567.4" font-size="15.00" fill="#ee1111" text-anchor="start" font-weight="bold" textLength="52.5" lengthAdjust="spacingAndGlyphs">500 789</text>
<text x="2267.0" y="567.4" font-size="15.00" fill="#e0e0e0" text-anchor="start" stroke="#e0e0e0" stroke-width="0.4">Belgium</text>
<rect x="2197" y="576" width="336" height="1" fill="#505050"/>
<text x="2207.5" y="595.4" font-size="15.00" fill="#ee1111" text-anchor="start" font-weight="bold" textLength="52.5" lengthAdjust="spacingAndGlyphs">498 549</text>
<text x="2267.0" y="595.4" font-size="15.00" fill="#e0e0e0" text-anchor="start" stroke="#e0e0e0" stroke-width="0.4">Iraq</text>
<rect x="2197" y="604" width="336" height="1" fill="#505050"/>
<text x="2207.5" y="623.4" font-size="15.00" fill="#ee1111" text-anchor="start" font-weight="bold" textLength="52.5" lengthAdjust="spacingAndGlyphs">483 153</text>
<text x="2267.0" y="623.4" font-size="15.00" fill="#e0e0e0" text-anchor="start" stroke="#e0e0e0" stroke-width="0.4">Ukraine</text>
<rect x="2197" y="632" width="336" height="1" fill="#505050"/>
<text x="2207.5" y="651.4" font-size="15.00" fill="#ee1111" text-anchor="start" font-weight="bold" textLength="52.5" lengthAdjust="spacingAndGlyphs">440 569</text>
<text x="2267.0" y="651.4" font-size="15.00" fill="#e0e0e0" text-anchor="start" stroke="#e0e0e0" stroke-width="0.4">Indonesia</text>
<rect x="2197" y="660" width="336" height="1" fill="#505050"/>
<text x="2207.5" y="679.4" font-size="15.00" fill="#ee1111" text-anchor="start" font-weight="bold" textLength="52.5" lengthAdjust="spacingAndGlyphs">421 921</text>
<text x="2267.0" y="679.4" font-size="15.00" fill="#e0e0e0" text-anchor="start" stroke="#e0e0e0" stroke-width="0.4">Bangladesh</text>
<rect x="2197" y="688" width="336" height="1" fill="#505050"/>
<text x="2207.5" y="707.4" font-size="15.00" fill="#ee1111" text-anchor="start" font-weight="bold" textLength="52.5" lengthAdjust="spacingAndGlyphs">416 806</text>
<text x="2267.0" y="707.4" font-size="15.00" fill="#e0e0e0" text-anchor="start" stroke="#e0e0e0" stroke-width="0.4">Netherlands</text>
<rect x="2197" y="716" width="336" height="1" fill="#505050"/>
<text x="2207.5" y="735.4" font-size="15.00" fill="#ee1111" text-anchor="start" font-weight="bold" textLength="52.5" lengthAdjust="spacingAndGlyphs">414 828</text>
<text x="2267.0" y="735.4" font-size="15.00" fill="#e0e0e0" text-anchor="start" stroke="#e0e0e0" stroke-width="0.4">Czechia</text>
<rect x="2197" y="744" width="336" height="1" fill="#505050"/>
<text x="2207.5" y="763.4" font-size="15.00" fill="#ee1111" text-anchor="start" font-weight="bold" textLength="52.5" lengthAdjust="spacingAndGlyphs">398 449</text>
<text x="2267.0" y="763.4" font-size="15.00" fill="#e0e0e0" text-anchor="start" stroke="#e0e0e0" stroke-width="0.4">Philippines</text>
<rect x="2197" y="772" width="336" height="1" fill="#505050"/>
<text x="2207.5" y="791.4" font-size="15.00" fill="#ee1111" text-anchor="start" font-weight="bold" textLength="52.5" lengthAdjust="spacingAndGlyphs">394 255</text>
<text x="2267.0" y="791.4" font-size="15.00" fill="#e0e0e0" text-anchor="start" stroke="#e0e0e0" stroke-width="0.4">Turkey</text>
<rect x="2197" y="800" width="336" height="1" fill="#505050"/>
<text x="2207.5" y="819.4" font-size="15.00" fill="#ee1111" text-anchor="start" font-weight="bold" textLength="52.5" lengthAdjust="spacingAndGlyphs">350 592</text>
<text x="2267.0" y="819.4" font-size="15.00" fill="#e0e0e0" text-anchor="start" stroke="#e0e0e0" stroke-width="0.4">Saudi Arabia</text>
<rect x="2197" y="828" width="336" height="1" fill="#505050"/>
<text x="2207.5" y="847.4" font-size="15.00" fill="#ee1111" text-anchor="start" font-weight="bold" textLength="52.5" lengthAdjust="spacingAndGlyphs">344 839</text>
<text x="2267.0" y="847.4" font-size="15.00" fill="#e0e0e0" text-anchor="start" stroke="#e0e0e0" stroke-width="0.4">Pakistan</text>
<rect x="2197" y="856" width="336" height="1" fill="#505050"/>
<text x="2207.5" y="875.4" font-size="15.00" fill="#ee1111" text-anchor="start" font-weight="bold" textLength="52.5" lengthAdjust="spacingAndGlyphs">319 562</text>
<text x="2267.0" y="875.4" font-size="15.00" fill="#e0e0e0" text-anchor="start" stroke="#e0e0e0" stroke-width="0.4">Israel</text>
<rect x="2197" y="884" width="336" height="1" fill="#505050"/>
<text x="2207.5" y="903.4" font-size="15.00" fill="#ee1111" text-anchor="start" font-weight="bold" textLength="52.5" lengthAdjust="spacingAndGlyphs">303 751</text>
<text x="2267.0" y="903.4" font-size="15.00" fill="#e0e0e0" text-anchor="start" stroke="#e0e0e0" stroke-width="0.4">Romania</text>
<rect x="2197" y="912" width="336" height="1" fill="#505050"/>
<text x="2207.5" y="931.4" font-size="15.00" fill="#ee1111" text-anchor="start" font-weight="bold" textLength="52.5" lengthAdjust="spacingAndGlyphs">267 163</text>
<text x="2267.0" y="931.4" font-size="15.00" fill="#e0e0e0" text-anchor="start" stroke="#e0e0e0" stroke-width="0.4">Canada</text>
<rect x="2197" y="940" width="336" height="1" fill="#505050"/>
<text x="2207.5" y="959.4" font-size="15.00" fill="#ee1111" text-anchor="start" font-weight="bold" textLength="52.5" lengthAdjust="spacingAndGlyphs">256 781</text>
<text x="2267.0" y="959.4" font-size="15.00" fill="#e0e0e0" text-anchor="start" stroke="#e0e0e0" stroke-width="0.4">Morocco</text>
<rect x="2197" y="968" width="336" height="1" fill="#505050"/>
<text x="2207.5" y="987.4" font-size="15.00" fill="#ee1111" text-anchor="start" font-weight="bold" textLength="52.5" lengthAdjust="spacingAndGlyphs">211 913</text>
<text x="2267.0" y="987.4" font-size="15.00" fill="#e0e0e0" text-anchor="start" stroke="#e0e0e0" stroke-width="0.4">Switzerland</text>
<rect x="2197" y="996" width="336" height="1" fill="#505050"/>
<text x="2207.5" y="1015.4" font-size="15.00" fill="#ee1111" text-anchor="start" font-weight="bold" textLength="52.5" lengthAdjust="spacingAndGlyphs">197 024</text>
<text x="2267.0" y="1015.4" font-size="15.00" fill="#e0e0e0" text-anchor="start" stroke="#e0e0e0" stroke-width="0.4">Nepal</text>
<rect x="2197" y="1024" width="336" height="1" fill="#505050"/>
<text x="2207.5" y="1043.4" font-size="15.00" fill="#ee1111" text-anchor="start" font-weight="bold" textLength="52.5" lengthAdjust="spacingAndGlyphs">179 324</text>
<text x="2267.0" y="1043.4" font-size="15.00" fill="#e0e0e0" text-anchor="start" stroke="#e0e0e0" stroke-width="0.4">Portugal</text>
<rect x="2197" y="1052" width="336" height="1" fill="#505050"/>
<text x="2207.5" y="1071.4" font-size="15.00" fill="#ee1111" text-anchor="start" font-weight="bold" textLength="52.5" lengthAdjust="spacingAndGlyphs">174 907</text>
<text x="2267.0" y="1071.4" font-size="15.00" fill="#e0e0e0" text-anchor="start" stroke="#e0e0e0" stroke-width="0.4">Ecuador</text>
<rect x="2197" y="1080" width="336" height="1" fill="#505050"/>
<text x="2207.5" y="1099.4" font-size="15.00" fill="#ee1111" text-anchor="start" font-weight="bold" textLength="52.5" lengthAdjust="spacingAndGlyphs">153 153</text>
<text x="2267.0" y="1099.4" font-size="15.00" fill="#e0e0e0" text-anchor="start" stroke="#e0e0e0" stroke-width="0.4">Austria</text>
<rect x="2197" y="1108" width="336" height="1" fill="#505050"/>
<text x="2207.5" y="1127.4" font-size="15.00" fill="#ee1111" text-anchor="start" font-weight="bold" textLength="52.5" lengthAdjust="spacingAndGlyphs">146 461</text>
<text x="2267.0" y="1127.4" font-size="15.00" fill="#e0e0e0" text-anchor="start" stroke="#e0e0e0" stroke-width="0.4">Sweden</text>
<rect x="2197" y="1136" width="336" height="1" fill="#505050"/>
<text x="2207.5" y="1155.4" font-size="15.00" fill="#ee1111" text-anchor="start" font-weight="bold" textLength="52.5" lengthAdjust="spacingAndGlyphs">143 289</text>
<text x="2267.0" y="1155.4" font-size="15.00" fill="#e0e0e0" text-anchor="start" stroke="#e0e0e0" stroke-width="0.4">United Arab Emirates</text>
<rect x="2197" y="1164" width="336" height="1" fill="#505050"/>
<text x="2207.5" y="1183.4" font-size="15.00" fill="#ee1111" text-anchor="start" font-weight="bold" textLength="52.5" lengthAdjust="spacingAndGlyphs">142 475</text>
<text x="2267.0" y="1183.4" font-size="15.00" fill="#e0e0e0" text-anchor="start" stroke="#e0e0e0" stroke-width="0.4">Bolivia</text>
<rect x="2197" y="1192" width="336" height="1" fill="#505050"/>
<text x="2207.5" y="1211.4" font-size="15.00" fill="#ee1111" text-anchor="start" font-weight="bold" textLength="52.5" lengthAdjust="spacingAndGlyphs">139 527</text>
<text x="2267.0" y="1211.4" font-size="15.00" fill="#e0e0e0" text-anchor="start" stroke="#e0e0e0" stroke-width="0.4">Panama</text>
<rect x="2197" y="1220" width="336" height="1" fill="#505050"/>
<text x="2207.5" y="1239.4" font-size="15.00" fill="#ee1111" text-anchor="start" font-weight="bold" textLength="52.5" lengthAdjust="spacingAndGlyphs">134 433</text>
<text x="2267.0" y="1239.4" font-size="15.00" fill="#e0e0e0" text-anchor="start" stroke="#e0e0e0" stroke-width="0.4">Qatar</text>
<rect x="2197" y="1248" width="336" height="1" fill="#505050"/>
<text x="2207.5" y="1267.4" font-size="15.00" fill="#ee1111" text-anchor="start" font-weight="bold" textLength="52.5" lengthAdjust="spacingAndGlyphs">131 743</text>
<text x="2267.0" y="1267.4" font-size="15.00" fill="#e0e0e0" text-anchor="start" stroke="#e0e0e0" stroke-width="0.4">Kuwait</text>
<rect x="2197" y="1276" width="336" height="1" fill="#505050"/>
<text x="2207.5" y="1295.4" font-size="15.00" fill="#ee1111" text-anchor="start" font-weight="bold" textLength="52.5" lengthAdjust="spacingAndGlyphs">130 182</text>
<text x="2267.0" y="1295.4" font-size="15.00" fill="#e0e0e0" text-anchor="start" stroke="#e0e0e0" stroke-width="0.4">Dominican Republic</text>
<rect x="2197" y="1304" width="336" height="1" fill="#505050"/>
<text x="2207.5" y="1323.4" font-size="15.00" fill="#ee1111" text-anchor="start" font-weight="bold" textLength="52.5" lengthAdjust="spacingAndGlyphs">118 503</text>
<text x="2267.0" y="1323.4" font-size="15.00" fill="#e0e0e0" text-anchor="start" stroke="#e0e0e0" stroke-width="0.4">Oman</text>
<rect x="2197" y="1332" width="336" height="1" fill="#505050"/>
<text x="2207.5" y="1351.4" font-size="15.00" fill="#ee1111" text-anchor="start" font-weight="bold" textLength="52.5" lengthAdjust="spacingAndGlyphs">116 772</text>
<text x="2267.0" y="1351.4" font-size="15.00" fill="#e0e0e0" text-anchor="start" stroke="#e0e0e0" stroke-width="0.4">Kazakhstan</text>
<rect x="2197" y="1360" width="336" height="1" fill="#505050"/>
<text x="2207.5" y="1379.4" font-size="15.00" fill="#ee1111" text-anchor="start" font-weight="bold" textLength="52.5" lengthAdjust="spacingAndGlyphs">116 363</text>
<text x="2267.0" y="1379.4" font-size="15.00" fill="#e0e0e0" text-anchor="start" stroke="#e0e0e0" stroke-width="0.4">Costa Rica</text>
<rect x="2197" y="1388" width="336" height="1" fill="#505050"/>
<text x="2207.5" y="1407.4" font-size="15.00" fill="#ee1111" text-anchor="start" font-weight="bold" textLength="52.5" lengthAdjust="spacingAndGlyphs">114 778</text>
<text x="2267.0" y="1407.4" font-size="15.00" fill="#e0e0e0" text-anchor="start" stroke="#e0e0e0" stroke-width="0.4">Hungary</text>
<rect x="2197" y="1416" width="336" height="1" fill="#505050"/>
<text x="2207.5" y="1435.4" font-size="15.00" fill="#ee1111" text-anchor="start" font-weight="bold" textLength="52.5" lengthAdjust="spacingAndGlyphs">111 262</text>
<text x="2267.0" y="1435.4" font-size="15.00" fill="#e0e0e0" text-anchor="start" stroke="#e0e0e0" stroke-width="0.4">Guatemala</text>
<rect x="2197" y="1444" width="336" height="1" fill="#505050"/>
</svg>
<rect x="2528" y="72" width="20" height="1363" fill="#1f1f23"/>
<rect x="2528" y="100" width="4" height="1" fill="#505050"/>
<rect x="2528" y="128" width="4" height="1" fill="#505050"/>
<rect x="2528" y="156" width="4" height="1" fill="#505050"/>
<rect x="2528" y="184" width="4" height="1" fill="#505050"/>
<rect x="2528" y="212" width="4" height="1" fill="#505050"/>
<rect x="2528" y="240" width="4" height="1" fill="#505050"/>
<rect x="2528" y="268" width="4" height="1" fill="#505050"/>
<rect x="2528" y="296" width="4" height="1" fill="#505050"/>
<rect x="2528" y="324" width="4" height="1" fill="#505050"/>
<rect x="2528" y="352" width="4" height="1" fill="#505050"/>
<rect x="2528" y="380" width="4" height="1" fill="#505050"/>
<rect x="2528" y="408" width="4" height="1" fill="#505050"/>
<rect x="2528" y="436" width="4" height="1" fill="#505050"/>
<rect x="2528" y="464" width="4" height="1" fill="#505050"/>
<rect x="2528" y="492" width="4" height="1" fill="#505050"/>
<rect x="2528" y="520" width="4" height="1" fill="#505050"/>
<rect x="2528" y="548" width="4" height="1" fill="#505050"/>
<rect x="2528" y="576" width="4" height="1" fill="#505050"/>
<rect x="2528" y="604" width="4" height="1" fill="#505050"/>
<rect x="2528" y="632" width="4" height="1" fill="#505050"/>
<rect x="2528" y="660" width="4" height="1" fill="#505050"/>
<rect x="2528" y="688" width="4" height="1" fill="#505050"/>
<rect x="2528" y="716" width="4" height="1" fill="#505050"/>
<rect x="2528" y="744" width="4" height="1" fill="#505050"/>
<rect x="2528" y="772" width="4" height="1" fill="#505050"/>
<rect x="2528" y="800" width="4" height="1" fill="#505050"/>
<rect x="2528" y="828" width="4" height="1" fill="#505050"/>
<rect x="2528" y="856" width="4" height="1" fill="#505050"/>
<rect x="2528" y="884" width="4" height="1" fill="#505050"/>
<rect x="2528" y="912" width="4" height="1" fill="#505050"/>
<rect x="2528" y="940" width="4" height="1" fill="#505050"/>
<rect x="2528" y="968" width="4" height="1" fill="#505050"/>
<rect x="2528" y="996" width="4" height="1" fill="#505050"/>
<rect x="2528" y="1024" width="4" height="1" fill="#505050"/>
<rect x="2528" y="1052" width="4" height="1" fill="#505050"/>
<rect x="2528" y="1080" width="4" height="1" fill="#505050"/>
<rect x="2528" y="1108" width="4" height="1" fill="#505050"/>
<rect x="2528" y="1136" width="4" height="1" fill="#505050"/>
<rect x="2528" y="1164" width="4" height="1" fill="#505050"/>
<rect x="2528" y="1192" width="4" height="1" fill="#505050"/>
<rect x="2528" y="1220" width="4" height="1" fill="#505050"/>
<rect x="2528" y="1248" width="4" height="1" fill="#505050"/>
<rect x="2528" y="1276" width="4" height="1" fill="#505050"/>
<rect x="2528" y="1304" width="4" height="1" fill="#505050"/>
<rect x="2528" y="1332" width="4" height="1" fill="#505050"/>
<rect x="2528" y="1360" width="4" height="1" fill="#505050"/>
<rect x="2528" y="1388" width="4" height="1" fill="#505050"/>
<rect x="2528" y="1416" width="4" height="1" fill="#505050"/>
<rect x="2533" y="89" width="15" height="355" fill="#78787c"/>
<path d="M2537,83 L2540.5,79.5 L2544,83" fill="none" stroke="#888" stroke-width="1.2"/>
<path d="M2537,1422 L2540.5,1425.5 L2544,1422" fill="none" stroke="#888" stroke-width="1.2"/>
<circle cx="27" cy="1452" r="10" fill="#cfe3f2"/>
</svg></body></html>
